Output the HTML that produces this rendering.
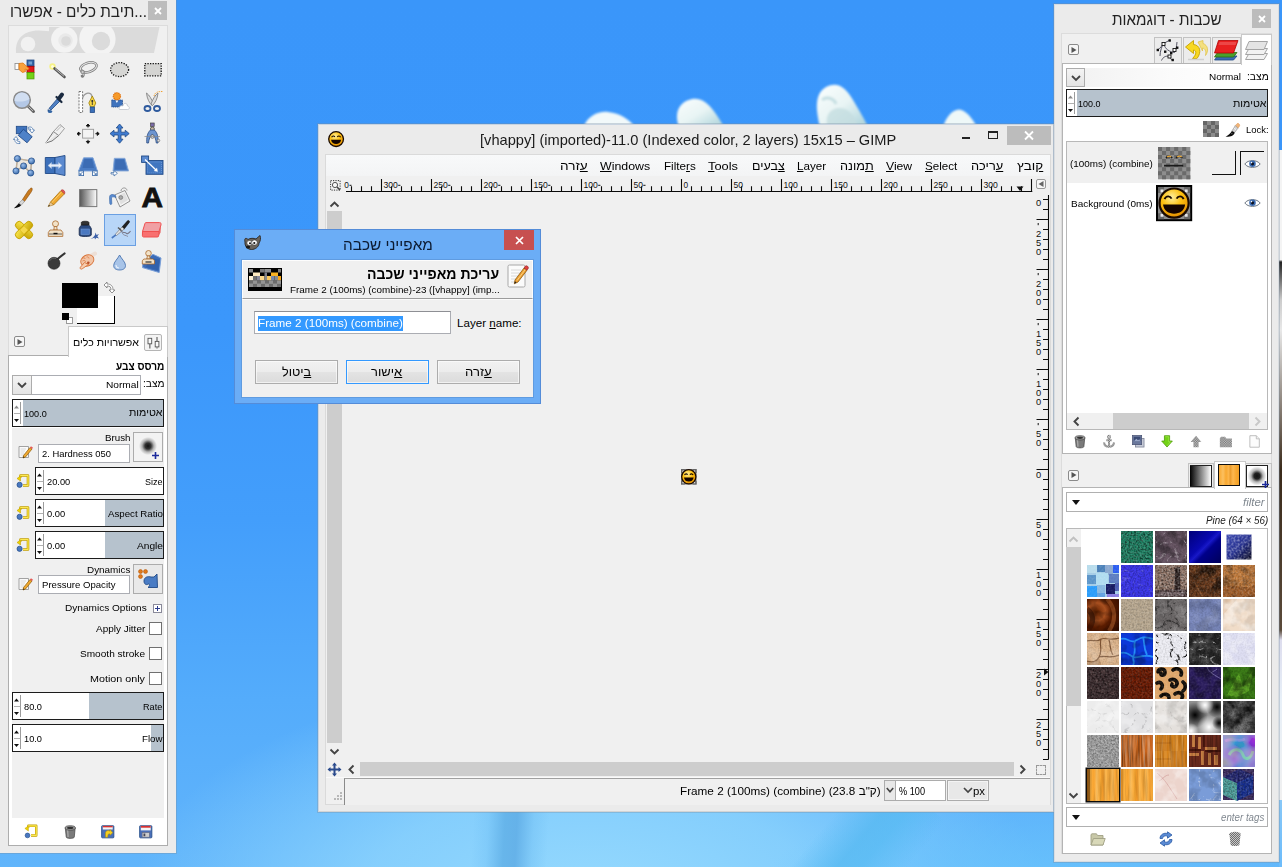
<!DOCTYPE html>
<html lang="he">
<head>
<meta charset="utf-8">
<title>GIMP</title>
<style>
*{box-sizing:border-box;margin:0;padding:0}
html,body{width:1282px;height:867px;overflow:hidden}
body{position:relative;font-family:"Liberation Sans",sans-serif;font-size:11px;color:#000;background:#3d98fa}
.abs,.abs div{position:absolute}
.t{position:absolute;white-space:nowrap;line-height:1}
.r{text-align:right}
svg{position:absolute;overflow:visible}
/* desktop */
#desk{left:0;top:0;width:1282px;height:867px;overflow:hidden;
 background:linear-gradient(180deg,#3a96fa 0px,#3b97fb 330px,#439efb 520px,#54acfb 700px,#5cb1fb 800px,#61b5fb 867px)}
/* generic window frame */
.win{background:#ebebeb;box-shadow:0 0 0 1px rgba(120,140,160,.35)}
.panel{background:#fff;border:1px solid #b4b4b4}
.gray{background:#f0f0f0}
.slider{border:1px solid #1c1c1c;background:#fff;overflow:hidden}
.slider .fill{top:0;bottom:0;right:0;background:#b6c2cd}
.slider .spin{left:0;top:0;bottom:0;width:10px;background:#fff}
.entry{background:#fff;border:1px solid #abadb3}
.btn{background:linear-gradient(#f4f4f4,#e4e4e4);border:1px solid #acacac}
.chk{background:#fff;border:1px solid #707070;width:13px;height:13px}
</style>
</head>
<body>
<div id="desk" class="abs">
<div style="left:0;top:0;width:1282px;height:867px;background:radial-gradient(ellipse 460px 230px at 590px 905px,rgba(150,218,254,1),rgba(142,213,253,.8) 50%,rgba(120,200,252,0) 100%)"></div>
<div style="left:760px;top:780px;width:520px;height:120px;background:radial-gradient(ellipse 300px 100px at 300px 110px,rgba(104,196,252,.9),rgba(104,196,252,0))"></div>
<div style="left:472px;top:800px;width:76px;height:80px;transform:skewX(-3deg);background:linear-gradient(90deg,rgba(96,176,230,0),rgba(110,190,244,.35) 20%,rgba(94,174,230,.8) 42%,rgba(92,170,228,.8) 58%,rgba(112,190,242,.4) 80%,rgba(96,176,230,0))"></div>
<div style="left:818px;top:775px;width:90px;height:150px;transform:rotate(40deg);transform-origin:50% 50%;background:linear-gradient(90deg,rgba(84,184,240,0),rgba(84,184,240,.7) 40%,rgba(86,186,242,.7) 60%,rgba(84,184,240,0))"></div>
<svg style="left:560px;top:70px" width="440" height="60" viewBox="560 70 440 60">
<defs><filter id="pb" x="-10%" y="-20%" width="120%" height="140%"><feGaussianBlur stdDeviation="1.300"/></filter>
<linearGradient id="pg2" x1="0" y1="0" x2="1" y2="1"><stop offset="0" stop-color="#fbfefe"/><stop offset=".5" stop-color="#e8f4f4"/><stop offset="1" stop-color="#a8d0d8"/></linearGradient></defs>
<g filter="url(#pb)">
<path d="M584 126C588 116 598 111 608 112C620 113 630 120 635 127Z" fill="#f2f9fa"/>
<path d="M679 127C674 114 678 102 692 99C704 97 712 106 724 127Z" fill="url(#pg2)"/>
<path d="M820 127C816 110 814 94 826 87C838 81 846 88 853 100C859 110 865 120 868 127Z" fill="url(#pg2)"/>
<path d="M828 127C824 116 830 108 840 108C850 108 856 118 858 127Z" fill="#c4dde0" opacity=".8"/>
<path d="M822 100C826 96 834 98 836 104" fill="none" stroke="#b4d4d8" stroke-width="3" opacity=".7"/>
<path d="M943 127C946 117 952 110 959 109.500C966 110 972 118 977 127Z" fill="#eef8f8"/>
</g>
</svg>
<!-- right sliver beyond the dock -->
<div style="left:1279px;top:0;width:3px;height:867px;background:linear-gradient(180deg,#3a96fa 0,#3a96fa 150px,#f4f4f4 150px,#f4f4f4 260px,#ddd 260px,#222 262px,#ccc 300px,#e8e8e8 330px,#3a2a1a 470px,#5a4a3a 630px,#dde 640px,#e8f0f8 700px,#f0f0f0 800px,#88c8f8 800px,#6cbcfb 867px)"></div>

</div>

<!-- ================= TOOLBOX ================= -->
<div id="toolbox" class="abs win" style="left:0;top:0;width:176px;height:853px">
<div style="left:148px;top:1px;width:19px;height:19px;background:#bcbcbc"></div>
<svg style="left:154px;top:7px" width="8" height="8" viewBox="0 0 8 8"><path d="M1 1L7 7M7 1L1 7" stroke="#fff" stroke-width="1.8"/></svg>
<!-- inner tool area -->
<div style="left:8px;top:25px;width:160px;height:821px;background:#f0f0f0;border:1px solid #dcdcdc"></div>
<!-- wilber header -->
<svg style="left:15px;top:27px;overflow:hidden" width="146" height="26" viewBox="0 0 146 26">
 <g fill="#dbdbdb">
  <path d="M1 26 C0 14 6 6 18 4 C28 2.500 36 6 44 4 L44 26Z"/>
  <path d="M34 0 L144.500 0 L139 26 L34 26Z"/>
 </g>
 <circle cx="13" cy="17" r="7.300" fill="#f1f1f1"/>
 <circle cx="49.300" cy="12.600" r="13.200" fill="#f3f3f3"/>
 <circle cx="50.500" cy="13.500" r="7.200" fill="#e9e9e9"/>
 <circle cx="51" cy="14" r="4.800" fill="#dbdbdb"/>
 <circle cx="82.400" cy="12" r="18.200" fill="#f3f3f3"/>
 <circle cx="86" cy="14" r="9.200" fill="#dbdbdb"/>
</svg>
<!--TOOLS-->
<!-- selected tool -->
<div style="left:104px;top:214px;width:32px;height:32px;background:#b8d6f8;border:1px solid #6a9fe2"></div>
<svg style="left:0;top:0" width="176" height="330" viewBox="0 0 176 330">
<defs>
<linearGradient id="gbl" x1="0" y1="0" x2="0" y2="1"><stop offset="0" stop-color="#6d9ad6"/><stop offset="1" stop-color="#3465a4"/></linearGradient>
<linearGradient id="ggr" x1="0" y1="0" x2="1" y2="0"><stop offset="0" stop-color="#555"/><stop offset="1" stop-color="#fff"/></linearGradient>
<radialGradient id="gball" cx=".4" cy=".35" r=".7"><stop offset="0" stop-color="#9cc0ee"/><stop offset="1" stop-color="#3465a4"/></radialGradient>
<linearGradient id="gyel" x1="0" y1="0" x2="1" y2="1"><stop offset="0" stop-color="#fce94f"/><stop offset="1" stop-color="#c4a000"/></linearGradient>
</defs>
<!-- r0c0 select by colour -->
<g><rect x="27" y="60" width="7" height="6.3" fill="#3465a4" stroke="#204a87" stroke-width=".8"/><rect x="28.5" y="61.5" width="3.5" height="3" fill="#729fcf"/>
<rect x="27" y="66.3" width="7" height="6.3" fill="#e01818" stroke="#a40000" stroke-width=".8"/>
<rect x="27" y="72.6" width="7" height="6.3" fill="#73d216" stroke="#4e9a06" stroke-width=".8"/>
<rect x="15" y="63.5" width="4" height="6" fill="#fff" stroke="#888" stroke-width=".8"/>
<path d="M19 63.5 L23 63 L29 68.5 L27.5 70 L25 69 L25.5 71.5 L22.5 72.5 L19 69.5Z" fill="#f9a23c" stroke="#e07810" stroke-width=".8"/></g>
<!-- r0c1 fuzzy select -->
<g><circle cx="52.5" cy="66.5" r="3.2" fill="#f6f27a" opacity=".9"/><circle cx="52.5" cy="66.5" r="1.5" fill="#fffde0"/>
<path d="M54.5 68.5 L64.5 77" stroke="#555" stroke-width="2.6" stroke-linecap="round"/><path d="M55 68.6 L64 76.3" stroke="#bbb" stroke-width="1"/></g>
<!-- r0c2 lasso -->
<g fill="none"><ellipse cx="88.500" cy="67.300" rx="8.300" ry="4.600" transform="rotate(-17 88.500 67.300)" stroke="#7c7c7c" stroke-width="2.600"/><ellipse cx="88.500" cy="67.300" rx="8.300" ry="4.600" transform="rotate(-17 88.500 67.300)" stroke="#e4e4e4" stroke-width="1"/>
<path d="M81.500 70 C82.500 72.500 84.500 73 83.500 75.500 C83 77.300 81.300 77 82 75" stroke="#7c7c7c" stroke-width="2.200"/><path d="M81.500 70 C82.500 72.500 84.500 73 83.500 75.500" stroke="#e4e4e4" stroke-width=".8"/><circle cx="82.600" cy="72" r="1.700" fill="#ccc" stroke="#777" stroke-width=".8"/></g>
<!-- r0c3 ellipse select -->
<ellipse cx="119.6" cy="69.6" rx="9" ry="7" fill="#d6d6d4" stroke="#111" stroke-width="1.3" stroke-dasharray="1.3 1.3"/>
<!-- r0c4 rect select -->
<rect x="144.8" y="63.6" width="16.4" height="12.2" fill="#d4d4d2" stroke="#111" stroke-width="1.3" stroke-dasharray="1.3 1.3"/>
<!-- r1c0 zoom -->
<g><path d="M28 106 L33.5 111.5" stroke="#666" stroke-width="3" stroke-linecap="round"/><path d="M28.5 106.5 L33 111" stroke="#bbb" stroke-width="1"/>
<circle cx="22" cy="100" r="8.3" fill="#b4c8e6" stroke="#8a8a8a" stroke-width="1.5"/><path d="M14.5 101 A7.5 7.5 0 0 1 29.5 99 C25 102 19 102 14.5 101Z" fill="#d4e0f2" opacity=".9"/></g>
<!-- r1c1 colour picker -->
<g><path d="M49 108.5 L58 98 L60.5 100.5 L51 110Z" fill="#4f80c4" stroke="#204a87" stroke-width=".8"/><path d="M48 109 C47 111 48 112 50 111Z" fill="#204a87"/>
<path d="M56.5 97 L61.5 102" stroke="#1a2a40" stroke-width="2.2" stroke-linecap="round"/><path d="M59 98.5 L62 94.5" stroke="#1a2a40" stroke-width="4" stroke-linecap="round"/>
<ellipse cx="50" cy="111.5" rx="2.2" ry="1.5" fill="#3465a4"/></g>
<!-- r1c2 paths -->
<g><rect x="79" y="91.5" width="3.6" height="21" fill="#fff" stroke="#666" stroke-width=".9" stroke-dasharray="2 1.2"/>
<path d="M82.5 98 C85 92 91 91.5 92.3 97" fill="none" stroke="#999" stroke-width="1.3"/>
<path d="M92.3 96 L95.8 103 L94 107 L90.6 107 L88.8 103Z" fill="#f5d547" stroke="#a08000" stroke-width=".8"/><path d="M92.3 100 L92.3 105" stroke="#333" stroke-width=".9"/><circle cx="92.3" cy="101" r="1" fill="#333"/>
<rect x="90.2" y="107" width="4.2" height="5.5" fill="#3a6fb8" stroke="#204a87" stroke-width=".8"/></g>
<!-- r1c3 foreground select -->
<g><rect x="111.7" y="100" width="10.8" height="7" fill="#3f73bd" stroke="#204a87" stroke-width=".9" stroke-dasharray="1.2 .8"/>
<circle cx="116.9" cy="96.3" r="3.6" fill="#f59a2a" stroke="#e06a00" stroke-width="1.2" stroke-dasharray="1.2 .8"/><path d="M115.5 100.5 L116.9 103 L118.3 100.5Z" fill="#fff"/>
<path d="M119.5 109.5 C118 107 121 105 123 106 C123 102.5 127.5 102.5 127.5 106 C130 106.5 130 109.5 127.5 109.5Z" fill="#fff" stroke="#c0c4cc" stroke-width=".8"/></g>
<!-- r1c4 scissors -->
<g><path d="M146.5 93 C147 99 149.5 103 152 105.5 L153.5 104 C152 100 149.5 95 146.5 93Z" fill="#ddd" stroke="#777" stroke-width=".8"/>
<path d="M158 93 C157.5 99 155 103 152.5 105.5 L151 104 C152.5 100 155 95 158 93Z" fill="#ddd" stroke="#777" stroke-width=".8"/>
<ellipse cx="147.5" cy="108.5" rx="3" ry="2.5" fill="none" stroke="#2e5a9e" stroke-width="1.8"/><ellipse cx="157" cy="108.5" rx="3" ry="2.5" fill="none" stroke="#2e5a9e" stroke-width="1.8"/>
<path d="M154 96 C155 92 158 91.5 163 91.5" fill="none" stroke="#f0a030" stroke-width="1" stroke-dasharray="1.3 1"/></g>
<!-- r2c0 rotate -->
<g><rect x="16.3" y="126.3" width="10.5" height="7.4" fill="#3f73bd" stroke="#204a87" stroke-width=".8"/>
<rect x="19.5" y="132" width="11.5" height="8" transform="rotate(40 25.2 136)" fill="#4f82c8" stroke="#204a87" stroke-width=".8"/>
<path d="M28 127.5 C31 126 33 128 33 130 L34.5 130 L32 133 L29.5 130 L31 130 C31 129 30 128.5 28.5 129.3Z" fill="#fff" stroke="#3465a4" stroke-width=".7"/>
<path d="M20 143.5 C16.5 144 14.5 142 15 139.5 L13.3 139.3 L16.2 136.5 L18.3 140 L16.8 139.8 C16.7 141 17.8 141.8 19.8 141.6Z" fill="#fff" stroke="#3465a4" stroke-width=".7"/></g>
<!-- r2c1 crop knife -->
<g><path d="M45.800 143 L53.500 131.500 L58.800 135.500 L52 141Z" fill="#e6e6e6" stroke="#6a6a6a" stroke-width=".9"/><path d="M45.800 143 L56 133.500" stroke="#fff" stroke-width=".8"/>
<path d="M53.500 131.500 L60 124.500 L64.500 128.500 L58.800 135.500Z" fill="#f0f0f0" stroke="#8a8a8a" stroke-width=".8"/><path d="M56.500 131 L61.500 126" stroke="#aaa" stroke-width=".8"/></g>
<!-- r2c2 align -->
<g><rect x="82.6" y="129.3" width="11" height="8.8" fill="#f4f4f4" stroke="#999" stroke-width=".9"/>
<g fill="#111" stroke="#111" stroke-width="1"><path d="M80.8 133.7 H78"/><path d="M79 132 L77 133.7 L79 135.4Z"/><path d="M95.4 133.7 H98"/><path d="M97.2 132 L99.2 133.7 L97.2 135.4Z"/>
<path d="M88 127.5 V125"/><path d="M86.3 126 L88 124 L89.7 126Z"/><path d="M88 139.8 V142.4"/><path d="M86.3 141.4 L88 143.4 L89.7 141.4Z"/></g></g>
<!-- r2c3 move -->
<path d="M119.6 124 L123 128 L121 128 L121 132.2 L125.2 132.2 L125.2 130.2 L129.2 133.6 L125.2 137 L125.2 135 L121 135 L121 139.2 L123 139.2 L119.6 143.2 L116.2 139.2 L118.2 139.2 L118.2 135 L114 135 L114 137 L110 133.6 L114 130.2 L114 132.2 L118.2 132.2 L118.2 128 L116.2 128Z" fill="#3f7bd0" stroke="#204a87" stroke-width=".8"/>
<!-- r2c4 measure compass -->
<g><rect x="150.6" y="123" width="3.6" height="3.4" fill="#7a6aa8" stroke="#444" stroke-width=".7"/><circle cx="152.4" cy="129" r="2" fill="#c8b8a0" stroke="#444" stroke-width=".8"/>
<path d="M150.5 130 C147 133 146.5 138 146.8 143 L148.5 143 C149 139 150 136 152.4 134.5 C154.8 136 155.8 139 156.3 143 L158 143 C158.3 138 157.8 133 154.3 130Z" fill="#6d95d0" stroke="#2a4a80" stroke-width=".8"/>
<circle cx="152.4" cy="136.5" r="1.8" fill="#ddd" stroke="#555" stroke-width=".7"/><path d="M144.5 136.5 H160" stroke="#888" stroke-width=".7"/><circle cx="158.5" cy="140.5" r="1.3" fill="#ddd" stroke="#666" stroke-width=".6"/></g>
<!-- r3c0 cage -->
<g><path d="M17.4 158.6 L31.5 161 L30.7 173 L23.6 166 L16 171Z" fill="#e8e0d0" fill-opacity=".5" stroke="#a0a0a0" stroke-width="1.4"/><path d="M17.4 158.6 L31.5 161 L30.7 173 L23.6 166 L16 171Z" fill="none" stroke="#e0c090" stroke-width=".6"/>
<g fill="url(#gball)" stroke="#204a87" stroke-width=".7"><circle cx="17.4" cy="158.6" r="3.1"/><circle cx="31.5" cy="161" r="3.1"/><circle cx="23.6" cy="166" r="3.1"/><circle cx="16" cy="171" r="3.1"/><circle cx="30.7" cy="173" r="3.1"/></g></g>
<!-- r3c1 flip -->
<g><path d="M45.3 157.5 L55 157.5 L55 173.5 L45.3 173.5Z" fill="#3c70ba" stroke="#204a87" stroke-width=".9"/><path d="M55 157.5 L65 155.5 L65 175.5 L55 173.5Z" fill="#5b8ad0" stroke="#204a87" stroke-width=".9"/>
<path d="M48 165.5 L51.5 162.5 L51.5 164.3 L58.5 164.3 L58.5 162.5 L62 165.5 L58.5 168.5 L58.5 166.7 L51.5 166.7 L51.5 168.5Z" fill="#e8eef8" stroke="#a8c0e0" stroke-width=".5"/></g>
<!-- r3c2 perspective -->
<g><path d="M83.6 157.8 L93 157.8 L97.4 171 L78.6 171Z" fill="#4a7cc4" stroke="#7ba0d8" stroke-width=".9"/><path d="M84.5 159 L92 159 L94 168 L82.5 168Z" fill="#3c6cb4"/>
<rect x="79" y="171" width="4.6" height="4.6" fill="#fff" stroke="#3465a4" stroke-width=".8"/><rect x="92.6" y="171" width="4.6" height="4.6" fill="#fff" stroke="#3465a4" stroke-width=".8"/>
<path d="M80 174.6 L82.6 172 M80 174.6 L80 173 M80 174.6 L81.6 174.6" stroke="#3465a4" stroke-width=".8"/><path d="M96.2 174.6 L93.6 172 M96.2 174.6 L96.2 173 M96.2 174.6 L94.6 174.6" stroke="#3465a4" stroke-width=".8"/></g>
<!-- r3c3 shear -->
<g><path d="M114.3 158.3 L124.9 158.3 L128.6 171 L113 171Z" fill="#4a7cc4" stroke="#8aaad8" stroke-width=".9"/><path d="M115.5 159.5 L124 159.5 L126.5 169.5 L115 169.5Z" fill="#3c6cb4"/>
<path d="M111 172.6 L114 172.6 L114 170.6 L117.4 173.3 L114 176 L114 174 L111 174Z" fill="#fff" stroke="#3465a4" stroke-width=".7"/></g>
<!-- r3c4 scale -->
<g><rect x="146" y="160.5" width="17" height="13.8" fill="#4076c0" stroke="#204a87" stroke-width=".9"/><rect x="147.5" y="162" width="14" height="10.8" fill="none" stroke="#7ba0d8" stroke-width=".7" stroke-dasharray="1 1"/>
<rect x="141.6" y="156" width="7" height="6.4" fill="#5a8ad0" stroke="#204a87" stroke-width=".9"/>
<path d="M145 159.5 L156.5 170.5" stroke="#fff" stroke-width="1.3"/><path d="M157.8 171.8 L153.8 171 L157 167.8Z" fill="#fff"/></g>
<!-- r4c0 paintbrush -->
<g><path d="M31.8 188 C32.8 189 32 191 30.5 193 L24.5 201.5 L22.3 199.8 L28 191 C29.5 189 31 187.5 31.8 188Z" fill="#c87a20" stroke="#8a4a00" stroke-width=".6"/>
<path d="M22.3 199.8 L24.5 201.5 L21.2 205.2 L18.8 203.3Z" fill="#d8d8d8" stroke="#888" stroke-width=".6"/>
<path d="M18.8 203.3 L21.2 205.2 C19 207.5 16 208 13.8 208.2 C15.5 207 17 205.5 18.8 203.3Z" fill="#111"/></g>
<!-- r4c1 pencil -->
<g><path d="M50.5 202 L61 190.5 L64.5 193.8 L53.5 205Z" fill="#f0a830" stroke="#a06800" stroke-width=".7"/><path d="M51.5 203 L62 191.5" stroke="#f8d070" stroke-width="1"/>
<path d="M61 190.500 C62.5 188.500 66 191.500 64.500 193.800Z" fill="#e85858" stroke="#a83030" stroke-width=".6"/>
<path d="M50.500 202 L53.500 205 L48 206.500Z" fill="#e8c898" stroke="#a06800" stroke-width=".5"/><path d="M48 206.500 L49.200 204.800 L49.900 205.900Z" fill="#222"/></g>
<!-- r4c2 blend -->
<rect x="79.600" y="189.600" width="17.200" height="17" fill="url(#ggr)" stroke="#777" stroke-width="1"/>
<!-- r4c3 bucket -->
<g><path d="M114.500 195 L125 190.500 L130 201 L120 207Z" fill="#f4f4f4" stroke="#888" stroke-width=".9"/><path d="M117.500 196 L124.500 192.500 L128 200 L120.800 204.500Z" fill="#e0e0e0"/>
<path d="M121 191 C121 187.500 126.500 186.500 127 190.500" fill="none" stroke="#999" stroke-width="1"/><circle cx="120.800" cy="197.500" r="1.900" fill="#aaa" stroke="#666" stroke-width=".6"/>
<path d="M115.500 195.500 C112 193.500 109.500 194.500 109.500 197.500 L109.800 203.500 C109.800 204.800 111.800 204.800 111.800 203.500 L111.500 198 C111.500 196.500 113.500 196.500 116 197.500Z" fill="#5a8ad0" stroke="#3465a4" stroke-width=".6"/></g>
<!-- r4c4 text tool: drawn with real text -->
<text x="152.300" y="207" text-anchor="middle" font-family="Liberation Sans, sans-serif" font-weight="bold" font-size="27.500" fill="#111" stroke="#111" stroke-width=".8" textLength="21.500" lengthAdjust="spacingAndGlyphs">A</text>
<!-- r5c0 heal -->
<g stroke="#c4a000" stroke-width=".9" fill="url(#gyel)"><rect x="13.500" y="226.300" width="21" height="7.400" rx="3.600" transform="rotate(45 24 230)"/><rect x="13.500" y="226.300" width="21" height="7.400" rx="3.600" transform="rotate(-45 24 230)"/></g>
<rect x="21" y="227" width="6" height="6" transform="rotate(45 24 230)" fill="#f4d84a" stroke="#d4b010" stroke-width=".5"/>
<!-- r5c1 clone stamp -->
<g fill="#f2e2c8" stroke="#a8682c" stroke-width=".8"><circle cx="55.500" cy="223.800" r="3"/><path d="M54.300 226.500 L56.700 226.500 L57.200 230 L53.800 230Z"/><path d="M50 230 L61 230 L62.800 232.500 L62.800 236.400 L48.300 236.400 L48.300 232.500Z"/></g><path d="M49 234 H62" stroke="#555" stroke-width=".9"/><path d="M53.500 233.500 H57.500" stroke="#111" stroke-width="1.400"/>
<!-- r5c2 ink -->
<g><path d="M80.500 226 C80.500 224.500 89.800 224.500 89.800 226 L91.300 228.500 L91.300 235 C91.300 237 79.200 237 79.200 235 L79.200 228.500Z" fill="#2a4a80" stroke="#1a2a4a" stroke-width=".8"/><rect x="81" y="229" width="8.500" height="5.500" fill="#4a78c0" stroke="#7ba0d8" stroke-width=".5"/>
<path d="M81.300 225 L81.300 222.500 C81.300 220.800 89 220.800 89 222.500 L89 225Z" fill="#333" stroke="#111" stroke-width=".6"/>
<path d="M93 237.500 L95 235 L95.500 232.500 L96.500 235 L99 234 L97.300 236.300 L99 238.500 L96.300 237.800 L95 239.500 L94.600 237.800 L90.500 239Z" fill="#3a5fa8"/></g>
<!-- r5c3 airbrush -->
<g><path d="M122 227 L127.500 220.800 C128.500 219.800 130.200 221.300 129.300 222.400 L124.200 229Z" fill="#222" stroke="#000" stroke-width=".5"/>
<path d="M122 227 L124.200 229 L116.500 235.500 L115.300 234.300Z" fill="#e4e4e4" stroke="#777" stroke-width=".7"/><path d="M115.900 234.900 L111.800 238" stroke="#4a78c0" stroke-width="1.600"/>
<path d="M118 227.500 L121.500 230.800" stroke="#555" stroke-width="1.400"/><path d="M121 230.500 C122 234 125 231.500 126 233 C127 235 129.500 232.500 130.500 231" fill="none" stroke="#778" stroke-width="1.100"/><path d="M122.300 233 C123.500 236 126 235 128 236.500" fill="none" stroke="#889" stroke-width=".9"/></g>
<!-- r5c4 eraser -->
<g><path d="M146 222.600 L159.500 222.600 C161 222.600 161.300 223.600 161 224.800 L159 231.500 L142.500 231.500 L144.800 224 C145 223 145.400 222.600 146 222.600Z" fill="#f0a0a4" stroke="#f05050" stroke-width="1"/><path d="M142.500 231.500 L159 231.500 L158.600 236 C158.500 236.800 158 237 157.300 237 L143.800 237 C142.800 237 142.400 236.500 142.400 235.800Z" fill="#f87070" stroke="#f05050" stroke-width="1"/><path d="M159 231.500 L161 224.800 L160.500 232.500 L158.600 236Z" fill="#e86060"/></g>
<!-- r6c1 dodge/burn -->
<g><path d="M57.500 259 L64.500 253.500" stroke="#333" stroke-width="2.200" stroke-linecap="round"/><circle cx="54" cy="263.300" r="6" fill="#3a3a3a" stroke="#222" stroke-width=".6"/><path d="M49.500 261 A5 5 0 0 1 56 258.500" stroke="#666" stroke-width="1" fill="none"/></g>
<!-- r6c2 smudge -->
<g><path d="M90 256.500 L95 253.500" stroke="#ecd8cc" stroke-width="4" stroke-linecap="round" opacity=".7"/>
<ellipse cx="87.300" cy="260.500" rx="6.800" ry="5.400" transform="rotate(-28 87.300 260.500)" fill="#f2c4a6" stroke="#d8743a" stroke-width=".9"/>
<path d="M84.500 262.500 L80.300 267.300 C79.500 268.500 81 269.800 82.200 268.800 L88.500 264.500Z" fill="#f6cdb0" stroke="#d8743a" stroke-width=".9"/>
<path d="M82.300 258.500 C83.500 257.300 85 257.800 85.300 259 M82.500 261 C83.800 260 85.300 260.500 85.600 261.800 M86.500 257 C88 256.500 89 257.500 89 258.500" fill="none" stroke="#d8743a" stroke-width=".7"/>
<circle cx="88.300" cy="262.800" r="1.300" fill="#b8502a"/></g>
<!-- r6c3 blur drop -->
<path d="M119.600 255 C121.500 259 125.500 262 125.500 265.500 C125.500 269 122.500 270 119.600 270 C116.700 270 113.700 269 113.700 265.500 C113.700 262 117.700 259 119.600 255Z" fill="#a8c4e8" stroke="#4a74b0" stroke-width=".9"/><path d="M116 265 C116 267 117.500 268 119 268" fill="none" stroke="#e4eefa" stroke-width="1.100"/>
<!-- r6c4 perspective clone -->
<g><path d="M143 262 L153 254.300 L161 258 L159.200 272.500 L142.500 267.600Z" fill="#3c6cb8" stroke="#7ba0d8" stroke-width="1"/><path d="M150 258 L159.500 259.500 L158.300 270.500 L146 267Z" fill="#2c5aa4" opacity=".6"/>
<g fill="#f2e2c8" stroke="#a8682c" stroke-width=".8"><circle cx="148.500" cy="253.300" r="2.800"/><path d="M147.400 255.800 L149.600 255.800 L150.200 259 L146.800 259Z"/><path d="M143.800 259 L153.200 259 L154.500 260.800 L154.500 264 L142.300 264 L142.300 260.800Z"/></g><path d="M145.500 262 H151.500" stroke="#222" stroke-width="1.100"/></g>
</svg>

<!-- fg/bg colours -->
<div style="left:77px;top:296px;width:38px;height:28px;background:#fff;border-right:1px solid #000;border-bottom:1px solid #000"></div>
<div style="left:62px;top:282.500px;width:36px;height:25.500px;background:#000"></div>
<div style="left:65.500px;top:316.500px;width:7.500px;height:7.500px;background:#fff;border:1px solid #9a9a9a"></div>
<div style="left:61.500px;top:312.500px;width:7px;height:7px;background:#000"></div>
<svg style="left:103px;top:281px" width="13" height="13" viewBox="0 0 13 13"><path d="M1 4 L4 1 L4 3 C8 3 10 5 10 9 L12 9 L9 12 L6 9 L8 9 C8 6 7 5 4 5 L4 7Z" fill="#fff" stroke="#777" stroke-width=".8"/></svg>
<!-- tab row -->
<div style="left:8px;top:355px;width:160px;height:491px;background:#fff;border:1px solid #adadad"></div>
<div style="left:68px;top:326px;width:100px;height:31px;background:#fff;border:1px solid #c9c9c9;border-bottom:none"></div>
<div style="left:14px;top:336px;width:11px;height:11px;border:1px solid #8a8a8a;border-radius:2px;background:#f6f6f6"></div>
<svg style="left:17px;top:339px" width="6" height="6" viewBox="0 0 6 6"><path d="M.5 0 L5.5 3 L.5 6Z" fill="#555"/></svg>
<div style="left:144px;top:334px;width:18px;height:17px;border:1px solid #b5b5b5;border-radius:2px;background:#f4f4f4"></div>
<svg style="left:146px;top:336px" width="14" height="14" viewBox="0 0 14 14"><rect x="3" y="7.500" width="1.600" height="5" fill="#8a8a8a"/><rect x="2" y="2.300" width="3.700" height="5.500" fill="#fafafa" stroke="#555" stroke-width=".9"/><rect x="10.200" y="1" width="1.600" height="4.500" fill="#8a8a8a"/><rect x="9.200" y="5.400" width="3.700" height="5.500" fill="#fafafa" stroke="#555" stroke-width=".9"/><rect x="10.200" y="11" width="1.600" height="1.500" fill="#8a8a8a"/></svg>
<!-- tool options -->
<div class="entry" style="left:12px;top:375px;width:129px;height:20px"></div>
<div class="btn" style="left:12px;top:375px;width:20px;height:20px"></div>
<svg style="left:17px;top:382px" width="10" height="7" viewBox="0 0 10 7"><path d="M1 1L5 5L9 1" fill="none" stroke="#444" stroke-width="1.8"/></svg>
<!-- opacity slider -->
<div class="slider" style="left:12px;top:399px;width:152px;height:28px"><div class="fill" style="left:10px"></div><div class="spin"></div></div>
<!-- grey scrolled area -->
<div style="left:12px;top:428px;width:151.500px;height:390px;background:#f0f0f0"></div>
<div class="btn" style="left:133px;top:432px;width:30px;height:30px;background:#f3f3f3"></div>
<div style="left:137px;top:436px;width:22px;height:22px;background:radial-gradient(circle at 11px 10px,#111 0,#333 3px,rgba(120,120,120,.5) 6px,rgba(240,240,240,0) 9px)"></div>
<svg style="left:152px;top:452px" width="7" height="7" viewBox="0 0 7 7"><path d="M3.5 0V7M0 3.5H7" stroke="#1c2a9c" stroke-width="1.6"/></svg>
<div class="entry" style="left:38px;top:444px;width:92px;height:19px"></div>
<!-- size / aspect / angle -->
<div class="slider" style="left:35px;top:467px;width:129px;height:28px"><div class="fill" style="left:128px"></div><div class="spin"></div></div>
<div class="slider" style="left:35px;top:499px;width:129px;height:28px"><div class="fill" style="left:69px"></div><div class="spin"></div></div>
<div class="slider" style="left:35px;top:531px;width:129px;height:28px"><div class="fill" style="left:69px"></div><div class="spin"></div></div>
<!-- dynamics -->
<div class="btn" style="left:133px;top:564px;width:30px;height:30px;background:#e9e9e9"></div>
<div class="entry" style="left:38px;top:575px;width:92px;height:19px"></div>
<div style="left:153px;top:604px;width:9px;height:9px;border:1px solid #8a8a9a;background:#fff"></div>
<svg style="left:155px;top:606px" width="5" height="5" viewBox="0 0 5 5"><path d="M2.5 0V5M0 2.5H5" stroke="#2a3a8c" stroke-width="1"/></svg>
<div class="chk" style="left:149px;top:622px"></div>
<div class="chk" style="left:149px;top:647px"></div>
<div class="chk" style="left:149px;top:672px"></div>
<div class="slider" style="left:12px;top:692px;width:152px;height:28px"><div class="fill" style="left:76px"></div><div class="spin"></div></div>
<div class="slider" style="left:12px;top:724px;width:152px;height:28px"><div class="fill" style="left:138px"></div><div class="spin"></div></div>

<div class="t" style="left:9.7px;top:3.3px;font-size:16.4px;transform-origin:0 50%;transform:scaleX(0.936);color:#222;direction:ltr">תיבת כלים - אפשרו...</div>
<div class="t" style="left:73.2px;top:337.2px;font-size:10.6px;transform-origin:0 50%;transform:scaleX(1.005);">אפשרויות כלים</div>
<div class="t" style="left:116.0px;top:361.0px;font-size:11px;transform-origin:0 50%;transform:scaleX(0.918);font-weight:bold">מרסס צבע</div>
<div class="t" style="left:142.7px;top:379.3px;font-size:10.4px;transform-origin:0 50%;transform:scaleX(0.983);direction:rtl">מצב:</div>
<div class="t" style="left:106.0px;top:379.6px;font-size:9.8px;transform-origin:0 50%;transform:scaleX(1.036);">Normal</div>
<div class="t" style="left:129.0px;top:408.3px;font-size:10.4px;transform-origin:0 50%;transform:scaleX(1.022);">אטימות</div>
<div class="t" style="left:24.0px;top:408.6px;font-size:9.8px;transform-origin:0 50%;transform:scaleX(0.927);">100.0</div>
<div class="t" style="left:105.0px;top:432.9px;font-size:9.8px;transform-origin:0 50%;transform:scaleX(0.996);">Brush</div>
<div class="t" style="left:41.5px;top:448.9px;font-size:9.8px;transform-origin:0 50%;transform:scaleX(0.960);">2. Hardness 050</div>
<div class="t" style="left:46.5px;top:476.9px;font-size:9.8px;transform-origin:0 50%;transform:scaleX(0.947);">20.00</div>
<div class="t" style="left:145.0px;top:476.9px;font-size:9.8px;transform-origin:0 50%;transform:scaleX(0.917);">Size</div>
<div class="t" style="left:46.5px;top:508.9px;font-size:9.8px;transform-origin:0 50%;transform:scaleX(0.956);">0.00</div>
<div class="t" style="left:107.5px;top:508.9px;font-size:9.8px;transform-origin:0 50%;transform:scaleX(0.990);">Aspect Ratio</div>
<div class="t" style="left:46.5px;top:540.9px;font-size:9.8px;transform-origin:0 50%;transform:scaleX(0.956);">0.00</div>
<div class="t" style="left:136.5px;top:540.9px;font-size:9.8px;transform-origin:0 50%;transform:scaleX(1.037);">Angle</div>
<div class="t" style="left:87.0px;top:565.1px;font-size:9.8px;transform-origin:0 50%;transform:scaleX(1.011);">Dynamics</div>
<div class="t" style="left:42.0px;top:580.1px;font-size:9.8px;transform-origin:0 50%;transform:scaleX(0.978);">Pressure Opacity</div>
<div class="t" style="left:65.0px;top:602.6px;font-size:9.8px;transform-origin:0 50%;transform:scaleX(1.028);">Dynamics Options</div>
<div class="t" style="left:95.8px;top:623.9px;font-size:9.8px;transform-origin:0 50%;transform:scaleX(1.016);">Apply Jitter</div>
<div class="t" style="left:80.0px;top:648.9px;font-size:9.8px;transform-origin:0 50%;transform:scaleX(1.029);">Smooth stroke</div>
<div class="t" style="left:90.0px;top:673.9px;font-size:9.8px;transform-origin:0 50%;transform:scaleX(1.097);">Motion only</div>
<div class="t" style="left:23.8px;top:701.9px;font-size:9.8px;transform-origin:0 50%;transform:scaleX(0.942);">80.0</div>
<div class="t" style="left:143.3px;top:701.9px;font-size:9.8px;transform-origin:0 50%;transform:scaleX(0.929);">Rate</div>
<div class="t" style="left:23.8px;top:733.9px;font-size:9.8px;transform-origin:0 50%;transform:scaleX(0.942);">10.0</div>
<div class="t" style="left:142.0px;top:733.9px;font-size:9.8px;transform-origin:0 50%;transform:scaleX(0.990);">Flow</div>
<svg style="left:13px;top:400px" width="10" height="26" viewBox="0 0 10 26"><path d="M1 8.500L3.500 5.500L6 8.500Z" fill="#8c8c8c"/><path d="M1 19L3.500 22L6 19Z" fill="#111"/><path d="M7.500 2V24" stroke="#9c9c9c" stroke-width="1"/><path d="M1 13.500H7.500" stroke="#a8a8a8" stroke-width=".9"/></svg>
<svg style="left:36px;top:468px" width="10" height="26" viewBox="0 0 10 26"><path d="M1 8.500L3.500 5.500L6 8.500Z" fill="#111"/><path d="M1 19L3.500 22L6 19Z" fill="#111"/><path d="M7.500 2V24" stroke="#9c9c9c" stroke-width="1"/><path d="M1 13.500H7.500" stroke="#a8a8a8" stroke-width=".9"/></svg>
<svg style="left:36px;top:500px" width="10" height="26" viewBox="0 0 10 26"><path d="M1 8.500L3.500 5.500L6 8.500Z" fill="#111"/><path d="M1 19L3.500 22L6 19Z" fill="#111"/><path d="M7.500 2V24" stroke="#9c9c9c" stroke-width="1"/><path d="M1 13.500H7.500" stroke="#a8a8a8" stroke-width=".9"/></svg>
<svg style="left:36px;top:532px" width="10" height="26" viewBox="0 0 10 26"><path d="M1 8.500L3.500 5.500L6 8.500Z" fill="#111"/><path d="M1 19L3.500 22L6 19Z" fill="#111"/><path d="M7.500 2V24" stroke="#9c9c9c" stroke-width="1"/><path d="M1 13.500H7.500" stroke="#a8a8a8" stroke-width=".9"/></svg>
<svg style="left:13px;top:693px" width="10" height="26" viewBox="0 0 10 26"><path d="M1 8.500L3.500 5.500L6 8.500Z" fill="#111"/><path d="M1 19L3.500 22L6 19Z" fill="#111"/><path d="M7.500 2V24" stroke="#9c9c9c" stroke-width="1"/><path d="M1 13.500H7.500" stroke="#a8a8a8" stroke-width=".9"/></svg>
<svg style="left:13px;top:725px" width="10" height="26" viewBox="0 0 10 26"><path d="M1 8.500L3.500 5.500L6 8.500Z" fill="#111"/><path d="M1 19L3.500 22L6 19Z" fill="#111"/><path d="M7.500 2V24" stroke="#9c9c9c" stroke-width="1"/><path d="M1 13.500H7.500" stroke="#a8a8a8" stroke-width=".9"/></svg>
<svg style="left:16px;top:474px" width="14" height="14" viewBox="0 0 14 14"><path d="M4.500 3.500 L4.500 1.500 L12 1.500 L12 11.500 L7 11.500" fill="none" stroke="#c4a000" stroke-width="2.600" stroke-linejoin="round"/><path d="M4.500 3.500 L4.500 1.500 L12 1.500 L12 11.500 L7 11.500" fill="none" stroke="#fce94f" stroke-width="1.200" stroke-linejoin="round"/><path d="M1 4.500 L4.500 2 L4.500 7Z" fill="#edd400" stroke="#c4a000" stroke-width=".6"/><circle cx="3.600" cy="10.800" r="2.600" fill="#4a78c0" stroke="#204a87" stroke-width=".7"/></svg>
<svg style="left:16px;top:506px" width="14" height="14" viewBox="0 0 14 14"><path d="M4.500 3.500 L4.500 1.500 L12 1.500 L12 11.500 L7 11.500" fill="none" stroke="#c4a000" stroke-width="2.600" stroke-linejoin="round"/><path d="M4.500 3.500 L4.500 1.500 L12 1.500 L12 11.500 L7 11.500" fill="none" stroke="#fce94f" stroke-width="1.200" stroke-linejoin="round"/><path d="M1 4.500 L4.500 2 L4.500 7Z" fill="#edd400" stroke="#c4a000" stroke-width=".6"/><circle cx="3.600" cy="10.800" r="2.600" fill="#4a78c0" stroke="#204a87" stroke-width=".7"/></svg>
<svg style="left:16px;top:538px" width="14" height="14" viewBox="0 0 14 14"><path d="M4.500 3.500 L4.500 1.500 L12 1.500 L12 11.500 L7 11.500" fill="none" stroke="#c4a000" stroke-width="2.600" stroke-linejoin="round"/><path d="M4.500 3.500 L4.500 1.500 L12 1.500 L12 11.500 L7 11.500" fill="none" stroke="#fce94f" stroke-width="1.200" stroke-linejoin="round"/><path d="M1 4.500 L4.500 2 L4.500 7Z" fill="#edd400" stroke="#c4a000" stroke-width=".6"/><circle cx="3.600" cy="10.800" r="2.600" fill="#4a78c0" stroke="#204a87" stroke-width=".7"/></svg>
<svg style="left:18px;top:445px" width="15" height="14" viewBox="0 0 15 14"><path d="M1 1.500 H10.500 V12.500 H1Z" fill="#fafafa" stroke="#999" stroke-width=".9"/><path d="M2.500 4H8M2.500 6H7M2.500 8H6M2.500 10H6" stroke="#ccc" stroke-width=".7"/><path d="M5.500 10.500 L12 2.500 L14 4 L7.500 12 L5 13Z" fill="#f0a830" stroke="#8a5a00" stroke-width=".7"/><path d="M12 2.500 L13 1.300 L15 2.800 L14 4Z" fill="#e85858"/><path d="M5 13 L5.500 11.300 L6.500 12.200Z" fill="#222"/></svg>
<svg style="left:18px;top:577px" width="15" height="14" viewBox="0 0 15 14"><path d="M1 1.500 H10.500 V12.500 H1Z" fill="#fafafa" stroke="#999" stroke-width=".9"/><path d="M2.500 4H8M2.500 6H7M2.500 8H6M2.500 10H6" stroke="#ccc" stroke-width=".7"/><path d="M5.500 10.500 L12 2.500 L14 4 L7.500 12 L5 13Z" fill="#f0a830" stroke="#8a5a00" stroke-width=".7"/><path d="M12 2.500 L13 1.300 L15 2.800 L14 4Z" fill="#e85858"/><path d="M5 13 L5.500 11.300 L6.500 12.200Z" fill="#222"/></svg>
<svg style="left:136px;top:567px" width="24" height="24" viewBox="0 0 24 24"><g fill="#e07a1c" stroke="#b05000" stroke-width=".5"><circle cx="4.500" cy="4.500" r="2"/><circle cx="9.500" cy="4.500" r="2"/><circle cx="4.500" cy="9.500" r="2"/></g><path d="M8 14 C8 10 12 9 15 10 L18 10 L21 7 L21.500 20.500 L12 20.500 C14 19 14 17 12.500 17 C10 18.500 8 17 8 14Z" fill="#4a7cc4" stroke="#204a87" stroke-width=".9"/></svg>
<svg style="left:24px;top:824px" width="14" height="15" viewBox="0 0 16 17"><path d="M5 4 L5 2 L14 2 L14 13 L8 13" fill="none" stroke="#c4a000" stroke-width="2.800" stroke-linejoin="round"/><path d="M5 4 L5 2 L14 2 L14 13 L8 13" fill="none" stroke="#fce94f" stroke-width="1.300" stroke-linejoin="round"/><path d="M1 5 L5 2.300 L5 8Z" fill="#edd400" stroke="#c4a000" stroke-width=".6"/><circle cx="4" cy="13" r="2.700" fill="#4a78c0" stroke="#204a87" stroke-width=".7"/></svg>
<svg style="left:63.500px;top:824.500px" width="12.500" height="14.300" viewBox="0 0 14 16"><path d="M1.500 3.500 L2.500 13.500 C2.500 15.500 11.500 15.500 11.500 13.500 L12.500 3.500Z" fill="#7a7a7a" stroke="#444" stroke-width=".8"/><path d="M4 5 L4.600 13.500" stroke="#aaa" stroke-width="1.500"/><ellipse cx="7" cy="3.300" rx="5.800" ry="2.500" fill="#999" stroke="#444" stroke-width=".8"/><ellipse cx="7" cy="3.300" rx="3.600" ry="1.300" fill="#333"/></svg>
<svg style="left:100.800px;top:824.800px" width="13.500" height="13.500" viewBox="0 0 15 15"><rect x=".700" y=".700" width="13.600" height="13.600" rx="1" fill="#4a6fb8" stroke="#204a87" stroke-width=".9"/><rect x="2" y="1" width="11" height="4" fill="#f4f4f4"/><rect x="2" y="1" width="11" height="1.600" fill="#d83030"/><path d="M5 13.500 L5 9 C5 6 9 5.500 10 7 L10 5 L13 8.500 L10 11.500 L10 10 C8.500 9.500 7.500 10 7.500 13.500Z" fill="#f5d020" stroke="#b89000" stroke-width=".6"/></svg>
<svg style="left:138.800px;top:824.800px" width="13.500" height="13.500" viewBox="0 0 15 15"><rect x=".700" y=".700" width="13.600" height="13.600" rx="1" fill="#4a6fb8" stroke="#204a87" stroke-width=".9"/><rect x="2" y="1" width="11" height="5" fill="#f4f4f4"/><rect x="2" y="1" width="11" height="2" fill="#d83030"/><rect x="3.500" y="8.500" width="8" height="5" fill="#ccc" stroke="#667" stroke-width=".6"/><rect x="5" y="9.500" width="2" height="3" fill="#445"/></svg>


</div>

<!-- ================= MAIN IMAGE WINDOW ================= -->
<div id="main" class="abs win" style="left:318px;top:124px;width:736px;height:688px">
<div style="left:-318px;top:-124px;width:0;height:0">
<div style="left:318px;top:124px;width:736px;height:688px;border:1px solid #c9d4e0;border-bottom-color:#d4d4d4"></div>
<svg style="left:328px;top:131px" width="16.2" height="16.2" viewBox="0 0 16 16"><defs><radialGradient id="sma" cx=".42" cy=".3" r=".75"><stop offset="0" stop-color="#fff0a0"/><stop offset=".45" stop-color="#fdc010"/><stop offset="1" stop-color="#e08800"/></radialGradient></defs><circle cx="8" cy="8" r="7.300" fill="url(#sma)" stroke="#1a0a00" stroke-width="1.300"/><path d="M3.600 6.200 C4.300 4.600 6 4.600 6.800 6 M9.200 6 C10 4.600 11.700 4.600 12.400 6.200" fill="none" stroke="#1a0a00" stroke-width="1.100"/><path d="M3 8.600 L13 8.600 C12.500 11.600 10.500 12.800 8 12.800 C5.500 12.800 3.500 11.600 3 8.600Z" fill="#140400"/></svg>
<div class="t" style="left:479.8px;top:132.7px;font-size:14.6px;transform-origin:0 50%;transform:scaleX(1.003);color:#1a1a1a">[vhappy] (imported)-11.0 (Indexed color, 2 layers) 15x15 – GIMP</div>
<div style="left:1007px;top:126px;width:44px;height:19px;background:#bcbcbc"></div>
<svg style="left:1024px;top:131px" width="10" height="9" viewBox="0 0 10 9"><path d="M1 .5L9 8.500M9 .5L1 8.500" stroke="#fff" stroke-width="1.800"/></svg>
<div style="left:988px;top:131px;width:10px;height:8px;border:1px solid #222;border-top-width:2px"></div>
<div style="left:962px;top:137px;width:8px;height:2px;background:#222"></div>
<div style="left:325px;top:154px;width:726px;height:651px;background:#f0f0f0;border:1px solid #dadada"></div>
<div style="left:326px;top:155px;width:724px;height:21px;background:linear-gradient(#f8f9fa,#f3f4f5)"></div>
<div class="t" style="left:1016.9px;top:160.1px;font-size:12.4px;transform-origin:0 50%;transform:scaleX(1.085);text-underline-offset:1px"><u>ק</u>ובץ</div>
<div class="t" style="left:971.4px;top:160.1px;font-size:12.4px;transform-origin:0 50%;transform:scaleX(1.034);text-underline-offset:1px"><u>ע</u>ריכה</div>
<div class="t" style="left:925.4px;top:160.2px;font-size:11.6px;transform-origin:0 50%;transform:scaleX(0.998);text-underline-offset:1px"><u>S</u>elect</div>
<div class="t" style="left:886.4px;top:160.2px;font-size:11.6px;transform-origin:0 50%;transform:scaleX(1.049);text-underline-offset:1px"><u>V</u>iew</div>
<div class="t" style="left:839.9px;top:160.1px;font-size:12.4px;transform-origin:0 50%;transform:scaleX(1.023);text-underline-offset:1px"><u>ת</u>מונה</div>
<div class="t" style="left:797.4px;top:160.2px;font-size:11.6px;transform-origin:0 50%;transform:scaleX(1.005);text-underline-offset:1px"><u>L</u>ayer</div>
<div class="t" style="left:751.9px;top:160.1px;font-size:12.4px;transform-origin:0 50%;transform:scaleX(1.007);text-underline-offset:1px"><u>צ</u>בעים</div>
<div class="t" style="left:708.4px;top:160.2px;font-size:11.6px;transform-origin:0 50%;transform:scaleX(1.106);text-underline-offset:1px"><u>T</u>ools</div>
<div class="t" style="left:663.8px;top:160.2px;font-size:11.6px;transform-origin:0 50%;transform:scaleX(1.006);text-underline-offset:1px">Filte<u>r</u>s</div>
<div class="t" style="left:600.4px;top:160.2px;font-size:11.6px;transform-origin:0 50%;transform:scaleX(1.066);text-underline-offset:1px"><u>W</u>indows</div>
<div class="t" style="left:560.4px;top:160.1px;font-size:12.4px;transform-origin:0 50%;transform:scaleX(1.095);text-underline-offset:1px"><u>ע</u>זרה</div>
<svg style="left:0;top:0" width="1060" height="200" viewBox="0 0 1060 200"><g stroke="#0a0a0a" stroke-width="1.100" fill="none"><path d="M346 191.500H1032.300"/><path d="M351.50 186.2V191.5M361.50 186.2V191.5M371.50 186.2V191.5M381.50 179V191.5M391.50 186.2V191.5M401.50 186.2V191.5M411.50 186.2V191.5M421.50 186.2V191.5M431.50 179V191.5M441.50 186.2V191.5M451.50 186.2V191.5M461.50 186.2V191.5M471.50 186.2V191.5M481.50 179V191.5M491.50 186.2V191.5M501.50 186.2V191.5M511.50 186.2V191.5M521.50 186.2V191.5M531.50 179V191.5M541.50 186.2V191.5M551.50 186.2V191.5M561.50 186.2V191.5M571.50 186.2V191.5M581.50 179V191.5M591.50 186.2V191.5M601.50 186.2V191.5M611.50 186.2V191.5M621.50 186.2V191.5M631.50 179V191.5M641.50 186.2V191.5M651.50 186.2V191.5M661.50 186.2V191.5M671.50 186.2V191.5M681.50 179V191.5M691.50 186.2V191.5M701.50 186.2V191.5M711.50 186.2V191.5M721.50 186.2V191.5M731.50 179V191.5M741.50 186.2V191.5M751.50 186.2V191.5M761.50 186.2V191.5M771.50 186.2V191.5M781.50 179V191.5M791.50 186.2V191.5M801.50 186.2V191.5M811.50 186.2V191.5M821.50 186.2V191.5M831.50 179V191.5M841.50 186.2V191.5M851.50 186.2V191.5M861.50 186.2V191.5M871.50 186.2V191.5M881.50 179V191.5M891.50 186.2V191.5M901.50 186.2V191.5M911.50 186.2V191.5M921.50 186.2V191.5M931.50 179V191.5M941.50 186.2V191.5M951.50 186.2V191.5M961.50 186.2V191.5M971.50 186.2V191.5M981.50 179V191.5M991.50 186.2V191.5M1001.50 186.2V191.5M1011.50 186.2V191.5M1021.50 186.2V191.5M1031.50 179V191.5"/></g><g font-family="Liberation Sans, sans-serif" font-size="9.300" fill="#111"><text x="344.300" y="188" textLength="4.600" lengthAdjust="spacingAndGlyphs">0</text><path d="M349.500 185.300h2" stroke="#111" stroke-width="1"/><text x="383.40" y="188" textLength="14.4" lengthAdjust="spacingAndGlyphs">300</text><path d="M398.20 185.300h2.200" stroke="#111" stroke-width="1"/><text x="433.40" y="188" textLength="14.4" lengthAdjust="spacingAndGlyphs">250</text><path d="M448.20 185.300h2.200" stroke="#111" stroke-width="1"/><text x="483.40" y="188" textLength="14.4" lengthAdjust="spacingAndGlyphs">200</text><path d="M498.20 185.300h2.200" stroke="#111" stroke-width="1"/><text x="533.40" y="188" textLength="14.4" lengthAdjust="spacingAndGlyphs">150</text><path d="M548.20 185.300h2.200" stroke="#111" stroke-width="1"/><text x="583.40" y="188" textLength="14.4" lengthAdjust="spacingAndGlyphs">100</text><path d="M598.20 185.300h2.200" stroke="#111" stroke-width="1"/><text x="633.40" y="188" textLength="9.5" lengthAdjust="spacingAndGlyphs">50</text><path d="M643.30 185.300h2.200" stroke="#111" stroke-width="1"/><text x="683.40" y="188" textLength="4.6" lengthAdjust="spacingAndGlyphs">0</text><text x="733.40" y="188" textLength="9.5" lengthAdjust="spacingAndGlyphs">50</text><text x="783.40" y="188" textLength="14.4" lengthAdjust="spacingAndGlyphs">100</text><text x="833.40" y="188" textLength="14.4" lengthAdjust="spacingAndGlyphs">150</text><text x="883.40" y="188" textLength="14.4" lengthAdjust="spacingAndGlyphs">200</text><text x="933.40" y="188" textLength="14.4" lengthAdjust="spacingAndGlyphs">250</text><text x="983.40" y="188" textLength="14.4" lengthAdjust="spacingAndGlyphs">300</text></g><path d="M1016.500 186.500h7l-3.500 4.500z" fill="#111"/></svg>
<svg style="left:330px;top:180px" width="11" height="11" viewBox="0 0 11 11"><rect x=".6" y=".6" width="9.500" height="9.500" fill="none" stroke="#333" stroke-width="1" stroke-dasharray="1.200 1.200"/><circle cx="5" cy="5" r="2.600" fill="#f8f8f8" stroke="#555" stroke-width="1"/><path d="M7 7L10 10" stroke="#444" stroke-width="1.600"/></svg>
<div style="left:1036px;top:179px;width:10px;height:10px;border:1px solid #999;border-radius:2px;background:#f6f6f6"></div>
<svg style="left:1038px;top:181px" width="6" height="6" viewBox="0 0 6 6"><path d="M5.500 0L.5 3L5.500 6Z" fill="#666"/></svg>
<svg style="left:0;top:0" width="1060" height="800" viewBox="0 0 1060 800"><g stroke="#0a0a0a" stroke-width="1.100" fill="none"><path d="M1048.500 195V759.500"/><path d="M1043 199.50H1048.500M1043 209.50H1048.500M1036.500 219.50H1048.500M1043 229.50H1048.500M1043 239.50H1048.500M1043 249.50H1048.500M1043 259.50H1048.500M1036.500 269.50H1048.500M1043 279.50H1048.500M1043 289.50H1048.500M1043 299.50H1048.500M1043 309.50H1048.500M1036.500 319.50H1048.500M1043 329.50H1048.500M1043 339.50H1048.500M1043 349.50H1048.500M1043 359.50H1048.500M1036.500 369.50H1048.500M1043 379.50H1048.500M1043 389.50H1048.500M1043 399.50H1048.500M1043 409.50H1048.500M1036.500 419.50H1048.500M1043 429.50H1048.500M1043 439.50H1048.500M1043 449.50H1048.500M1043 459.50H1048.500M1036.500 469.50H1048.500M1043 479.50H1048.500M1043 489.50H1048.500M1043 499.50H1048.500M1043 509.50H1048.500M1036.500 519.50H1048.500M1043 529.50H1048.500M1043 539.50H1048.500M1043 549.50H1048.500M1043 559.50H1048.500M1036.500 569.50H1048.500M1043 579.50H1048.500M1043 589.50H1048.500M1043 599.50H1048.500M1043 609.50H1048.500M1036.500 619.50H1048.500M1043 629.50H1048.500M1043 639.50H1048.500M1043 649.50H1048.500M1043 659.50H1048.500M1036.500 669.50H1048.500M1043 679.50H1048.500M1043 689.50H1048.500M1043 699.50H1048.500M1043 709.50H1048.500M1036.500 719.50H1048.500M1043 729.50H1048.500M1043 739.50H1048.500M1043 749.50H1048.500M1043 759.50H1048.500"/></g><g font-family="Liberation Sans, sans-serif" font-size="9.300" fill="#111" text-anchor="middle"><text x="1038.700" y="205.800">0</text><path d="M1038.200 223.00v2.200" stroke="#111" stroke-width="1"/><text x="1038.700" y="236.70">2</text><text x="1038.700" y="246.00">5</text><text x="1038.700" y="255.30">0</text><path d="M1038.200 273.00v2.200" stroke="#111" stroke-width="1"/><text x="1038.700" y="286.70">2</text><text x="1038.700" y="296.00">0</text><text x="1038.700" y="305.30">0</text><path d="M1038.200 323.00v2.200" stroke="#111" stroke-width="1"/><text x="1038.700" y="336.70">1</text><text x="1038.700" y="346.00">5</text><text x="1038.700" y="355.30">0</text><path d="M1038.200 373.00v2.200" stroke="#111" stroke-width="1"/><text x="1038.700" y="386.70">1</text><text x="1038.700" y="396.00">0</text><text x="1038.700" y="405.30">0</text><path d="M1038.200 423.00v2.200" stroke="#111" stroke-width="1"/><text x="1038.700" y="436.70">5</text><text x="1038.700" y="446.00">0</text><text x="1038.700" y="477.70">0</text><text x="1038.700" y="527.70">5</text><text x="1038.700" y="537.00">0</text><text x="1038.700" y="577.70">1</text><text x="1038.700" y="587.00">0</text><text x="1038.700" y="596.30">0</text><text x="1038.700" y="627.70">1</text><text x="1038.700" y="637.00">5</text><text x="1038.700" y="646.30">0</text><text x="1038.700" y="677.70">2</text><text x="1038.700" y="687.00">0</text><text x="1038.700" y="696.30">0</text><text x="1038.700" y="727.70">2</text><text x="1038.700" y="737.00">5</text><text x="1038.700" y="746.30">0</text></g><path d="M1044 668.500v7l4.500-3.500z" fill="#111"/></svg>
<svg style="left:329px;top:200px" width="11" height="8" viewBox="0 0 11 8"><path d="M1.500 6.500L5.500 2.500L9.500 6.500" fill="none" stroke="#444" stroke-width="1.900"/></svg>
<div style="left:327px;top:211px;width:15px;height:532px;background:#cdcdcd"></div>
<svg style="left:329px;top:748px" width="11" height="8" viewBox="0 0 11 8"><path d="M1.500 1.500L5.500 5.500L9.500 1.500" fill="none" stroke="#444" stroke-width="1.900"/></svg>
<svg style="left:327px;top:762px" width="15" height="15" viewBox="0 0 15 15"><path d="M7.500 .5L10 3.500H8.500V6.500H11.500V5L14.500 7.500L11.500 10V8.500H8.500V11.500H10L7.500 14.500L5 11.500H6.500V8.500H3.500V10L.5 7.500L3.500 5V6.500H6.500V3.500H5Z" fill="#2a4a8c"/></svg>
<svg style="left:347px;top:764px" width="8" height="11" viewBox="0 0 8 11"><path d="M6.500 1.500L2.500 5.500L6.500 9.500" fill="none" stroke="#444" stroke-width="1.900"/></svg>
<div style="left:360px;top:762px;width:654px;height:14px;background:#cdcdcd"></div>
<svg style="left:1019px;top:764px" width="8" height="11" viewBox="0 0 8 11"><path d="M1.500 1.500L5.500 5.500L1.500 9.500" fill="none" stroke="#444" stroke-width="1.900"/></svg>
<div style="left:1036px;top:765px;width:10px;height:10px;border:1px dashed #999"></div>
<div style="left:344px;top:778px;width:706px;height:27px;border-left:1px solid #8a8a8a;border-top:1px solid #a0a0a0;background:#f0f0f0"></div>
<div style="left:326px;top:777px;width:724px;height:1px;background:#fafafa"></div>
<svg style="left:333px;top:791px" width="10" height="10" viewBox="0 0 10 10"><g fill="#b8b8b8"><rect x="7" y="1" width="2" height="2"/><rect x="4" y="4" width="2" height="2"/><rect x="7" y="4" width="2" height="2"/><rect x="1" y="7" width="2" height="2"/><rect x="4" y="7" width="2" height="2"/><rect x="7" y="7" width="2" height="2"/></g></svg>
<div style="left:947px;top:780px;width:42px;height:21px;border:1px solid #acacac;background:#e8e8e8;box-shadow:inset 0 0 0 1px #f4f4f4"></div>
<svg style="left:962.500px;top:787px" width="10" height="7" viewBox="0 0 10 7"><path d="M1 1L5 5L9 1" fill="none" stroke="#444" stroke-width="1.700"/></svg>
<div class="t" style="left:973.0px;top:786.2px;font-size:10.6px;transform-origin:0 50%;transform:scaleX(1.076);">px</div>
<div style="left:884px;top:780px;width:62px;height:21px;border:1px solid #acacac;background:#fff"></div>
<div style="left:884px;top:780px;width:12px;height:21px;border:1px solid #acacac;background:#e8e8e8"></div>
<svg style="left:886px;top:787px" width="8" height="7" viewBox="0 0 8 7"><path d="M.8 1L4 4.800L7.200 1" fill="none" stroke="#444" stroke-width="1.600"/></svg>
<div class="t" style="left:898.5px;top:786.5px;font-size:10px;transform-origin:0 50%;transform:scaleX(0.917);">% 100</div>
<div class="t" style="left:680.4px;top:784.7px;font-size:11.6px;transform-origin:0 50%;transform:scaleX(1.012);direction:ltr">Frame 2 (100ms) (combine) (23.8 ק"ב)</div>
<svg style="left:680.5px;top:468.7px" width="15.6" height="15.6" viewBox="0 0 16 16"><rect x="0" y="0" width="16" height="16" fill="#8a8a8a"/><path d="M0 0h4v4h-4zM12 0h4v4h-4zM0 12h4v4h-4zM12 12h4v4h-4z" fill="#666"/><path d="M1.500 1.500h1.500v1.500h-1.500zM13 1.500h1.500v1.500h-1.500zM1.500 13h1.500v1.500h-1.500zM13 13h1.500v1.500h-1.500z" fill="#eee"/><defs><radialGradient id="smb" cx=".42" cy=".3" r=".75"><stop offset="0" stop-color="#fff0a0"/><stop offset=".45" stop-color="#fdc010"/><stop offset="1" stop-color="#e08800"/></radialGradient></defs><circle cx="8" cy="8" r="7.300" fill="url(#smb)" stroke="#1a0a00" stroke-width="1.300"/><path d="M3.600 6.200 C4.300 4.600 6 4.600 6.800 6 M9.200 6 C10 4.600 11.700 4.600 12.400 6.200" fill="none" stroke="#1a0a00" stroke-width="1.100"/><path d="M3 8.600 L13 8.600 C12.500 11.600 10.500 12.800 8 12.800 C5.500 12.800 3.500 11.600 3 8.600Z" fill="#140400"/></svg>
</div>

</div>

<!-- ================= DOCK ================= -->
<div id="dock" class="abs win" style="left:1054px;top:4px;width:225px;height:858px">
<div style="left:-1054px;top:-4px;width:0;height:0">
<svg style="left:0;top:0" width="0" height="0"><defs><pattern id="stp" width="2" height="2" patternUnits="userSpaceOnUse"><rect width="2" height="2" fill="#c8c8c8"/><rect width="1" height="1" fill="#6e6e6e"/><rect x="1" y="1" width="1" height="1" fill="#6e6e6e"/></pattern></defs></svg>
<div style="left:1054px;top:4px;width:225px;height:858px;border:1px solid #d8dce0"></div>
<div class="t" style="left:1111.7px;top:10.5px;font-size:16.4px;transform-origin:0 50%;transform:scaleX(0.930);color:#222;direction:rtl">שכבות - דוגמאות</div>
<div style="left:1252px;top:9px;width:19px;height:19px;background:#bcbcbc"></div>
<svg style="left:1258px;top:15px" width="8" height="8" viewBox="0 0 8 8"><path d="M1 1L7 7M7 1L1 7" stroke="#fff" stroke-width="1.800"/></svg>
<div style="left:1061px;top:33px;width:211px;height:821px;background:#f0f0f0;border:1px solid #dcdcdc"></div>
<div style="left:1154px;top:36.500px;width:27.5px;height:27px;background:#ececec;border:1px solid #c2c2c2;border-bottom:none"></div>
<div style="left:1182.5px;top:36.500px;width:28.5px;height:27px;background:#ececec;border:1px solid #c2c2c2;border-bottom:none"></div>
<div style="left:1212px;top:36.500px;width:28.5px;height:27px;background:#ececec;border:1px solid #c2c2c2;border-bottom:none"></div>
<div style="left:1062px;top:63px;width:210px;height:391px;background:#fff;border:1px solid #b4b4b4"></div>
<div style="left:1241px;top:34px;width:31px;height:31px;background:#fff;border:1px solid #c9c9c9;border-bottom:none"></div>
<div style="left:1068px;top:44px;width:11px;height:11px;border:1px solid #8a8a8a;border-radius:2px;background:#f6f6f6"></div>
<svg style="left:1071px;top:46.5px" width="6" height="6" viewBox="0 0 6 6"><path d="M.5 0L5.500 3L.5 6Z" fill="#555"/></svg>
<svg style="left:1244px;top:40px" width="25" height="21" viewBox="0 0 25 21"><g fill="#f2f2f2" stroke="#a4a4a4" stroke-width="1"><path d="M1.500 19.500L5 13.500H23.500L20 19.500Z"/><path d="M1.500 14.500L5 8.500H23.500L20 14.500Z"/><path d="M1.500 9.500L5 1.500H23.500L20 9.500Z" fill="#e4e4e4"/></g></svg>
<svg style="left:1213px;top:39px" width="26" height="23" viewBox="0 0 26 23"><path d="M1.500 21L4.500 17H24L20.500 21Z" fill="#3a6ab4" stroke="#204a87" stroke-width=".8"/><path d="M1.500 18L4.500 13.500H24L20.500 18Z" fill="#4aa02c" stroke="#2a7010" stroke-width=".8"/><path d="M1.500 14L5.500 1.500H25L20.500 14Z" fill="#e82020" stroke="#b00000" stroke-width=".8"/><path d="M6.500 3H23.500L22.500 6H5.500Z" fill="#f06060" opacity=".6"/></svg>
<svg style="left:1184px;top:39px" width="26" height="22" viewBox="0 0 26 22"><path d="M14 3L19 1.500L19 4.500C24 6 25 12 21.500 16.500C22.500 12 21 9.500 18.500 9L18.500 12Z" fill="#f4e080" stroke="#e0c040" stroke-width=".7"/><path d="M1.500 8L9.500 1.500L9.500 5.500C16 6 18 13 13 19.500L8.500 19.500C13 15 12.500 11.500 9.500 11L9.500 14.500Z" fill="#f8d820" stroke="#c4a000" stroke-width=".9"/><path d="M4 20.500H20" stroke="#d0d0d0" stroke-width="1.500"/></svg>
<svg style="left:1156px;top:39px" width="24" height="23" viewBox="0 0 24 23"><g fill="none" stroke="#445" stroke-width=".9"><path d="M1.500 11C5 9 6 6 7.500 4.500C9 8 10 12 18.500 13.500C20 11 20.500 8 21 3"/><path d="M5.500 21.500C7 18 10 16.500 13 17.500C14 19 15 20.500 16 21"/><path d="M4 17C4 12 6 7 7.500 4.500L14 1"/></g><g fill="#111"><rect x="12.500" y=".3" width="2.400" height="2.400"/><rect x=".6" y="9.800" width="2.400" height="2.400"/><rect x="20" y="7.500" width="2.400" height="2.400"/><rect x="8" y="11.500" width="2.400" height="2.400"/><rect x="14" y="13" width="2.400" height="2.400"/><rect x="15.500" y="19.800" width="2.400" height="2.400"/></g><g fill="#fff" stroke="#111" stroke-width=".9"><rect x="6" y="3.500" width="3" height="3"/><rect x="17" y="9.500" width="3" height="3"/><rect x="12" y="16" width="3" height="3"/></g></svg>
<div style="left:1066px;top:68px;width:175px;height:19px;background:linear-gradient(90deg,#f1f1f1,#fbfbfb 60%,#fff)"></div>
<div class="btn" style="left:1066px;top:68px;width:19px;height:19px"></div>
<svg style="left:1070.500px;top:74.500px" width="10" height="7" viewBox="0 0 10 7"><path d="M1 1L5 5L9 1" fill="none" stroke="#444" stroke-width="1.800"/></svg>
<div class="t" style="left:1246.5px;top:72.1px;font-size:10.4px;transform-origin:0 50%;transform:scaleX(0.992);direction:rtl">מצב:</div>
<div class="t" style="left:1209.3px;top:72.4px;font-size:9.8px;transform-origin:0 50%;transform:scaleX(1.016);">Normal</div>
<div class="slider" style="left:1066px;top:89px;width:202px;height:28px"><div class="fill" style="left:10px"></div><div class="spin"></div></div>
<svg style="left:1067px;top:90px" width="10" height="26" viewBox="0 0 10 26"><path d="M1 8.500L3.500 5.500L6 8.500Z" fill="#8c8c8c"/><path d="M1 19L3.500 22L6 19Z" fill="#111"/><path d="M7.500 2V24" stroke="#9c9c9c" stroke-width="1"/><path d="M1 13.500H7.500" stroke="#a8a8a8" stroke-width=".9"/></svg>
<div class="t" style="left:1078.0px;top:99.0px;font-size:9.8px;transform-origin:0 50%;transform:scaleX(0.916);">100.0</div>
<div class="t" style="left:1232.9px;top:98.7px;font-size:10.4px;transform-origin:0 50%;transform:scaleX(1.019);">אטימות</div>
<div class="t" style="left:1245.5px;top:124.6px;font-size:9.8px;transform-origin:0 50%;transform:scaleX(0.968);">Lock:</div>
<svg style="left:1225px;top:122px" width="16" height="16" viewBox="0 0 16 16"><path d="M10.300 3.600L12.300 1.500C13.300 .8 15.300 2.800 14.600 3.900L12.900 6.200Z" fill="#f0b478" stroke="#d89050" stroke-width=".5"/><path d="M10.300 3.600L12.900 6.200L9.600 10.600L6.900 9Z" fill="#d4d4d4" stroke="#8c8c8c" stroke-width=".6"/><path d="M8.600 5.800L11 7.800" stroke="#f4f4f4" stroke-width=".8"/><path d="M6.900 9L9.600 10.600C9.600 13.600 5.500 15 .6 14.800C3.500 13.300 5.300 11.500 6.900 9Z" fill="#0c0c0c"/><circle cx="6.800" cy="11.500" r=".8" fill="#555"/></svg>
<svg style="left:1203px;top:121px" width="16" height="16" viewBox="0 0 16 15" preserveAspectRatio="none"><rect width="16" height="15" fill="#8c8c8c"/><path d="M0 0h4v3.750h-4zM8 0h4v3.750h-4zM4 3.750h4v3.750h-4zM12 3.750h4v3.750h-4zM0 7.500h4v3.750h-4zM8 7.500h4v3.750h-4zM4 11.250h4v3.750h-4zM12 11.250h4v3.750h-4z" fill="#666"/></svg>
<div style="left:1066px;top:141px;width:202px;height:289px;background:#fff;border:1px solid #b8b8b8"></div>
<div style="left:1067px;top:142px;width:200px;height:41px;background:#f0f0f0"></div>
<div class="t" style="left:1069.5px;top:158.8px;font-size:9.8px;transform-origin:0 50%;transform:scaleX(1.008);">(100ms) (combine)</div>
<div class="t" style="left:1070.9px;top:198.7px;font-size:9.8px;transform-origin:0 50%;transform:scaleX(1.019);">Background (0ms)</div>
<svg style="left:1158px;top:146.800px" width="32.300" height="32.300" viewBox="0 0 32 32"><rect width="32" height="32" fill="#8e8e8e"/><path d="M0 0h4v4h-4zM8 0h4v4h-4zM16 0h4v4h-4zM24 0h4v4h-4zM4 4h4v4h-4zM12 4h4v4h-4zM20 4h4v4h-4zM28 4h4v4h-4zM0 8h4v4h-4zM8 8h4v4h-4zM16 8h4v4h-4zM24 8h4v4h-4zM4 12h4v4h-4zM12 12h4v4h-4zM20 12h4v4h-4zM28 12h4v4h-4zM0 16h4v4h-4zM8 16h4v4h-4zM16 16h4v4h-4zM24 16h4v4h-4zM4 20h4v4h-4zM12 20h4v4h-4zM20 20h4v4h-4zM28 20h4v4h-4zM0 24h4v4h-4zM8 24h4v4h-4zM16 24h4v4h-4zM24 24h4v4h-4zM4 28h4v4h-4zM12 28h4v4h-4zM20 28h4v4h-4zM28 28h4v4h-4z" fill="#6a6a6a"/><path d="M8 11C9.500 8.500 12.500 8.500 14 11M18 11C19.500 8.500 22.500 8.500 24 11" fill="none" stroke="#1a1a1a" stroke-width="1.600"/><path d="M9 10C10.500 8.800 12 8.800 13 10M19 10C20.500 8.800 22 8.800 23.500 10" fill="none" stroke="#f0b040" stroke-width="1.200"/><path d="M6 18.500H25" stroke="#1a1a1a" stroke-width="1.800"/></svg>
<div style="left:1212px;top:151px;width:24px;height:24px;background:#f0f0f0;border-right:1px solid #111;border-bottom:1px solid #111"></div>
<div style="left:1240px;top:151px;width:24px;height:24px;background:#f0f0f0;border-left:1px solid #111;border-top:1px solid #111"></div>
<svg style="left:1243.5px;top:158.5px" width="17" height="10" viewBox="0 0 17 10"><path d="M.8 5C4 .5 13 .5 16.200 5C13 9.500 4 9.500 .8 5Z" fill="#fff" stroke="#6a7480" stroke-width="1"/><circle cx="8.500" cy="4.800" r="3.300" fill="#3a6ab0"/><circle cx="8.500" cy="4.800" r="1.600" fill="#0a1020"/><circle cx="7.500" cy="3.600" r=".8" fill="#fff"/></svg>
<svg style="left:1243.5px;top:198px" width="17" height="10" viewBox="0 0 17 10"><path d="M.8 5C4 .5 13 .5 16.200 5C13 9.500 4 9.500 .8 5Z" fill="#fff" stroke="#6a7480" stroke-width="1"/><circle cx="8.500" cy="4.800" r="3.300" fill="#3a6ab0"/><circle cx="8.500" cy="4.800" r="1.600" fill="#0a1020"/><circle cx="7.500" cy="3.600" r=".8" fill="#fff"/></svg>
<svg style="left:1155.800px;top:184.800px" width="36.200" height="36.200" viewBox="0 0 36 36"><defs><radialGradient id="smc" cx=".42" cy=".3" r=".75"><stop offset="0" stop-color="#fff0a0"/><stop offset=".45" stop-color="#fdc010"/><stop offset="1" stop-color="#e08800"/></radialGradient></defs><rect width="36" height="36" fill="#000"/><rect x="2" y="2" width="32" height="32" fill="#8e8e8e"/><path d="M2 2h6v6h-6zM28 2h6v6h-6zM2 28h6v6h-6zM28 28h6v6h-6z" fill="#666"/><path d="M4.500 4.500h3v3h-3zM28.500 4.500h3v3h-3zM4.500 28.500h3v3h-3zM28.500 28.500h3v3h-3z" fill="#e8e8e8"/><circle cx="18" cy="18" r="14.500" fill="url(#smc)" stroke="#1a0a00" stroke-width="2.200"/><path d="M8.500 14C10 10.500 14 10.500 15.500 13.500M20.500 13.500C22 10.500 26 10.500 27.500 14" fill="none" stroke="#1a0a00" stroke-width="1.900"/><path d="M7 19.500L29 19.500C28 26 23.500 28.500 18 28.500C12.500 28.500 8 26 7 19.500Z" fill="#140400"/></svg>
<div style="left:1067px;top:413px;width:200px;height:16px;background:#f0f0f0"></div>
<div style="left:1113px;top:413px;width:136px;height:16px;background:#cdcdcd"></div>
<svg style="left:1072px;top:415.500px" width="8" height="11" viewBox="0 0 8 11"><path d="M6.500 1.500L2.500 5.500L6.500 9.500" fill="none" stroke="#444" stroke-width="1.900"/></svg>
<svg style="left:1254px;top:415.500px" width="8" height="11" viewBox="0 0 8 11"><path d="M1.500 1.500L5.500 5.500L1.500 9.500" fill="none" stroke="#c8c8c8" stroke-width="1.900"/></svg>
<svg style="left:1073.68px;top:434.82px" width="12.04" height="13.76" viewBox="0 0 14 16"><path d="M1.500 3.500L2.500 13.500C2.500 15.500 11.500 15.500 11.500 13.500L12.500 3.500Z" fill="#7a7a7a" stroke="#444" stroke-width=".8"/><path d="M4 5L4.600 13.500" stroke="#aaa" stroke-width="1.500"/><ellipse cx="7" cy="3.300" rx="5.800" ry="2.500" fill="#999" stroke="#444" stroke-width=".8"/><ellipse cx="7" cy="3.300" rx="3.600" ry="1.300" fill="#333"/></svg>
<svg style="left:1102.88px;top:435.25px" width="12.04" height="12.9" viewBox="0 0 14 15"><g fill="none" stroke="url(#stp)" stroke-width="2.400"><path d="M7 3.500V13.500M3.800 6H10.200M1.200 8.500C1.500 12.500 4 13.600 7 13.600C10 13.600 12.500 12.500 12.800 8.500"/></g><circle cx="7" cy="2.200" r="1.600" fill="none" stroke="url(#stp)" stroke-width="1.600"/></svg>
<svg style="left:1132.15px;top:435.25px" width="12.9" height="12.9" viewBox="0 0 15 15"><rect x="4" y="4" width="10" height="10" fill="#c8ccd8" stroke="#7a8094" stroke-width=".9"/><rect x=".7" y=".7" width="10.500" height="10.500" fill="#6a789c" stroke="#4a5474" stroke-width=".9"/><rect x="2.200" y="2.200" width="7.500" height="5" fill="#3a4a74"/><path d="M2.200 7.200L5 4.500L7 6.200L8.500 5L9.700 7.200Z" fill="#9aa8c8"/></svg>
<svg style="left:1161.28px;top:435.25px" width="12.04" height="12.9" viewBox="0 0 14 15"><path d="M4 .8H10V7H13.200L7 14L.8 7H4Z" fill="#73d216" stroke="#4e9a06" stroke-width=".9"/><path d="M5 2H9V8H11L7 12.500" fill="none" stroke="#b0f060" stroke-width=".8" opacity=".8"/></svg>
<svg style="left:1190.38px;top:435.25px" width="12.04" height="12.9" viewBox="0 0 14 15"><path d="M4 14.200H10V8H13.200L7 1L.8 8H4Z" fill="url(#stp)"/></svg>
<svg style="left:1218.72px;top:435.68px" width="13.76" height="12.04" viewBox="0 0 16 14"><path d="M1 13V2.500L2.500 1H7L8.500 3H15V13Z" fill="url(#stp)"/></svg>
<svg style="left:1249.21px;top:435.25px" width="11.18" height="12.9" viewBox="0 0 13 15"><path d="M1 .8H8.500L12 4.500V14.200H1Z" fill="#fcfcfc" stroke="#b4b4b4" stroke-width="1"/><path d="M8.500 .8V4.500H12" fill="#eee" stroke="#b4b4b4" stroke-width=".9"/></svg>
<div style="left:1188px;top:462.500px;width:26px;height:26px;background:#ececec;border:1px solid #c2c2c2;border-bottom:none"></div>
<div style="left:1245px;top:462.500px;width:27px;height:26px;background:#ececec;border:1px solid #c2c2c2;border-bottom:none"></div>
<div style="left:1062px;top:487px;width:210px;height:367px;background:#fff;border:1px solid #b4b4b4"></div>
<div style="left:1214px;top:460.500px;width:32px;height:28px;background:#fff;border:1px solid #c9c9c9;border-bottom:none"></div>
<div style="left:1068px;top:469.5px;width:11px;height:11px;border:1px solid #8a8a8a;border-radius:2px;background:#f6f6f6"></div>
<svg style="left:1071px;top:472px" width="6" height="6" viewBox="0 0 6 6"><path d="M.5 0L5.500 3L.5 6Z" fill="#555"/></svg>
<div style="left:1189.600px;top:465px;width:22.400px;height:21.600px;background:linear-gradient(90deg,#000,#fff);border:1px solid #222;border-left-width:0"></div>
<div style="left:1218px;top:464px;width:22.300px;height:21.800px;border:1px solid #111;background:linear-gradient(90deg,#f8a830,#fcc060 20%,#f8a830 35%,#fdb850 50%,#e89828 55%,#fcb850 70%,#f8a830 85%,#f0a028)"></div>
<div style="left:1246.200px;top:465px;width:22px;height:21.600px;border:1px solid #222;background:radial-gradient(circle at 10px 10px,#111 0,#222 3px,rgba(120,120,120,.55) 6px,rgba(255,255,255,0) 9.500px),#fff"></div>
<svg style="left:1262px;top:480.500px" width="7" height="7" viewBox="0 0 7 7"><path d="M3.500 0V7M0 3.500H7" stroke="#1c2a9c" stroke-width="1.700"/></svg>
<div style="left:1066px;top:492px;width:202px;height:20px;background:#fff;border:1px solid #b0b0b0"></div>
<svg style="left:1072px;top:499.500px" width="8" height="5" viewBox="0 0 8 5"><path d="M0 0H8L4 5Z" fill="#111"/></svg>
<div class="t" style="left:1242.7px;top:497.5px;font-size:10px;transform-origin:0 50%;transform:scaleX(1.142);font-style:italic;color:#808890">filter</div>
<div class="t" style="left:1206.0px;top:515.7px;font-size:10px;transform-origin:0 50%;transform:scaleX(0.987);font-style:italic;color:#222">Pine (64 × 56)</div>
<div style="left:1066px;top:528px;width:202px;height:276px;background:#fff;border:1px solid #b8b8b8"></div>
<div style="left:1067px;top:529px;width:14px;height:274px;background:#f0f0f0"></div>
<div style="left:1065.500px;top:547px;width:15px;height:159px;background:#cdcdcd"></div>
<svg style="left:1067.500px;top:534.500px" width="11" height="8" viewBox="0 0 11 8"><path d="M1.500 6.500L5.500 2.500L9.500 6.500" fill="none" stroke="#c0c0c0" stroke-width="1.900"/></svg>
<svg style="left:1067.500px;top:791.500px" width="11" height="8" viewBox="0 0 11 8"><path d="M1.500 1.500L5.500 5.500L9.500 1.500" fill="none" stroke="#444" stroke-width="1.900"/></svg>
<svg style="left:0;top:0" width="1282" height="867" viewBox="0 0 1282 867">
<defs>
<filter id="nfd" x="0" y="0" width="1" height="1"><feTurbulence type="fractalNoise" baseFrequency=".55" numOctaves="2" seed="3"/><feColorMatrix type="matrix" values="0 0 0 0 0 0 0 0 0 0 0 0 0 0 0 2.600 0 0 0 -1"/></filter>
<filter id="nfl" x="0" y="0" width="1" height="1"><feTurbulence type="fractalNoise" baseFrequency=".5" numOctaves="2" seed="11"/><feColorMatrix type="matrix" values="0 0 0 0 1 0 0 0 0 1 0 0 0 0 1 0 2.600 0 0 -1"/></filter>
<filter id="ncd" x="0" y="0" width="1" height="1"><feTurbulence type="fractalNoise" baseFrequency=".09" numOctaves="3" seed="5"/><feColorMatrix type="matrix" values="0 0 0 0 0 0 0 0 0 0 0 0 0 0 0 3.400 0 0 0 -1.400"/></filter>
<filter id="ncl" x="0" y="0" width="1" height="1"><feTurbulence type="fractalNoise" baseFrequency=".08" numOctaves="3" seed="8"/><feColorMatrix type="matrix" values="0 0 0 0 1 0 0 0 0 1 0 0 0 0 1 0 3.400 0 0 -1.400"/></filter>
<filter id="nvd" x="0" y="0" width="1" height="1"><feTurbulence type="turbulence" baseFrequency=".07" numOctaves="3" seed="14"/><feColorMatrix type="matrix" values="0 0 0 0 0 0 0 0 0 0 0 0 0 0 0 -9 0 0 0 1.300"/></filter>
<filter id="nvl" x="0" y="0" width="1" height="1"><feTurbulence type="turbulence" baseFrequency=".07" numOctaves="3" seed="21"/><feColorMatrix type="matrix" values="0 0 0 0 1 0 0 0 0 1 0 0 0 0 1 -9 0 0 0 1.300"/></filter>
<filter id="nsd" x="0" y="0" width="1" height="1"><feTurbulence type="fractalNoise" baseFrequency=".5 .03" numOctaves="2" seed="4"/><feColorMatrix type="matrix" values="0 0 0 0 0 0 0 0 0 0 0 0 0 0 0 3 0 0 0 -1.200"/></filter>
<filter id="nsl" x="0" y="0" width="1" height="1"><feTurbulence type="fractalNoise" baseFrequency=".5 .03" numOctaves="2" seed="9"/><feColorMatrix type="matrix" values="0 0 0 0 1 0 0 0 0 1 0 0 0 0 1 3 0 0 0 -1.200"/></filter>
<filter id="psy" x="0" y="0" width="1" height="1"><feTurbulence type="fractalNoise" baseFrequency=".06" numOctaves="2" seed="7"/><feColorMatrix type="matrix" values="2.500 0 0 0 -.6 0 2.800 0 0 -.8 0 0 2.600 0 -.3 0 0 0 0 1"/></filter>
<linearGradient id="pdb" x1="0" y1="0" x2="1" y2="1"><stop offset="0" stop-color="#000078"/><stop offset=".42" stop-color="#0808b0"/><stop offset=".5" stop-color="#1818c8"/><stop offset=".6" stop-color="#00008a"/><stop offset="1" stop-color="#00005a"/></linearGradient>
<linearGradient id="psb" x1="0" y1="0" x2="1" y2="1"><stop offset="0" stop-color="#3a48b0"/><stop offset=".5" stop-color="#2a3490"/><stop offset="1" stop-color="#04041c"/></linearGradient>
<radialGradient id="psw" cx=".3" cy=".4" r=".8"><stop offset="0" stop-color="#6a2400"/><stop offset=".35" stop-color="#a85020"/><stop offset=".6" stop-color="#5a1c00"/><stop offset="1" stop-color="#3a1000"/></radialGradient>
<linearGradient id="ppine" x1="0" y1="0" x2="1" y2="0"><stop offset="0" stop-color="#e89020"/><stop offset=".1" stop-color="#fbb040"/><stop offset=".22" stop-color="#f8a430"/><stop offset=".3" stop-color="#fdc060"/><stop offset=".42" stop-color="#f8a834"/><stop offset=".5" stop-color="#f09828"/><stop offset=".58" stop-color="#fcb850"/><stop offset=".7" stop-color="#f8a838"/><stop offset=".8" stop-color="#fdbc58"/><stop offset=".9" stop-color="#f4a030"/><stop offset="1" stop-color="#fbb040"/></linearGradient>
</defs>
<g>
<rect x="1121" y="531" width="32" height="32" fill="#1c8062"/>
<rect x="1121" y="531" width="32" height="32" filter="url(#nfd)" opacity="0.55"/>
<rect x="1121" y="531" width="32" height="32" filter="url(#nfl)" opacity="0.18"/>
</g>
<g>
<rect x="1155" y="531" width="32" height="32" fill="#6a5866"/>
<rect x="1155" y="531" width="32" height="32" filter="url(#ncd)" opacity="0.35"/>
<rect x="1155" y="531" width="32" height="32" filter="url(#nvl)" opacity="0.35"/>
<rect x="1155" y="531" width="32" height="32" filter="url(#nfd)" opacity="0.15"/>
</g>
<g>
<rect x="1189" y="531" width="32" height="32" fill="url(#pdb)"/>
</g>
<g>
<rect x="1226.5" y="534.5" width="25" height="25" fill="url(#psb)"/>
<rect x="1226.5" y="534.5" width="25" height="25" filter="url(#nfl)" opacity="0.35"/>
</g>
<g>
<rect x="1087" y="565" width="32" height="32" fill="#a4cce6"/>
<svg x="1087" y="565" width="32" height="32" style="overflow:hidden"><rect x="0" y="0" width="32" height="32" fill="#a4cce6"/><rect x="0" y="0" width="10" height="8" fill="#b8dcec"/><rect x="10" y="0" width="8" height="7" fill="#4a80b8"/><rect x="18" y="0" width="8" height="10" fill="#8aa8d0"/><rect x="26" y="0" width="6" height="8" fill="#2a5cf0"/><rect x="0" y="10" width="9" height="9" fill="#5a94c8"/><rect x="9" y="8" width="12" height="12" fill="#b0dcf0"/><rect x="22" y="9" width="10" height="9" fill="#5a7cc0"/><rect x="0" y="21" width="10" height="11" fill="#2a9cfa"/><rect x="10" y="20" width="8" height="8" fill="#88b8e0"/><rect x="19" y="19" width="9" height="10" fill="#161a62"/><rect x="28" y="18" width="4" height="8" fill="#4a5cb0"/><rect x="10" y="28" width="8" height="4" fill="#60a0e0"/><rect x="20" y="29" width="12" height="3" fill="#8a7ce0"/></svg>
<rect x="1087" y="565" width="32" height="32" filter="url(#nfl)" opacity="0.1"/>
</g>
<g>
<rect x="1121" y="565" width="32" height="32" fill="#3038ea"/>
<svg x="1121" y="565" width="32" height="32" style="overflow:hidden"><rect width="32" height="32" fill="#5a3ce8" opacity=".35"/></svg>
<rect x="1121" y="565" width="32" height="32" filter="url(#nfd)" opacity="0.25"/>
<rect x="1121" y="565" width="32" height="32" filter="url(#nvl)" opacity="0.18"/>
</g>
<g>
<rect x="1155" y="565" width="32" height="32" fill="#8a6e60"/>
<svg x="1155" y="565" width="32" height="32" style="overflow:hidden"><path d="M19 3C21 8 19 16 20 26L26 27L25 2Z" fill="#1a1010" opacity=".85"/><path d="M0 25L32 24V32H0Z" fill="#3a2a30" opacity=".7"/><path d="M3 27h26v4h-26z" fill="#b0a0a8" opacity=".4"/><path d="M25 3h7v22h-7z" fill="#a08070" opacity=".5"/></svg>
<rect x="1155" y="565" width="32" height="32" filter="url(#nfd)" opacity="0.5"/>
<rect x="1155" y="565" width="32" height="32" filter="url(#nfl)" opacity="0.35"/>
</g>
<g>
<rect x="1189" y="565" width="32" height="32" fill="#6a3a1c"/>
<svg x="1189" y="565" width="32" height="32" style="overflow:hidden"><path d="M4 2L12 18M14 0L20 14M22 6L30 28M6 18L14 32" stroke="#a86a3a" stroke-width="1.500" opacity=".45"/></svg>
<rect x="1189" y="565" width="32" height="32" filter="url(#ncd)" opacity="0.6"/>
<rect x="1189" y="565" width="32" height="32" filter="url(#nfd)" opacity="0.4"/>
<rect x="1189" y="565" width="32" height="32" filter="url(#nfl)" opacity="0.12"/>
</g>
<g>
<rect x="1223" y="565" width="32" height="32" fill="#c47c3c"/>
<svg x="1223" y="565" width="32" height="32" style="overflow:hidden"><path d="M0 22C10 18 20 26 32 20V32H0Z" fill="#7a3a10" opacity=".45"/></svg>
<rect x="1223" y="565" width="32" height="32" filter="url(#ncd)" opacity="0.35"/>
<rect x="1223" y="565" width="32" height="32" filter="url(#nfl)" opacity="0.2"/>
<rect x="1223" y="565" width="32" height="32" filter="url(#nfd)" opacity="0.2"/>
</g>
<g>
<rect x="1087" y="599" width="32" height="32" fill="url(#psw)"/>
<svg x="1087" y="599" width="32" height="32" style="overflow:hidden"><path d="M20 0C28 8 30 20 22 32" fill="none" stroke="#c87038" stroke-width="4" opacity=".45"/><path d="M0 10C6 14 8 22 2 30" fill="none" stroke="#2a0a00" stroke-width="5" opacity=".5"/></svg>
<rect x="1087" y="599" width="32" height="32" filter="url(#ncd)" opacity="0.3"/>
</g>
<g>
<rect x="1121" y="599" width="32" height="32" fill="#b8a890"/>
<rect x="1121" y="599" width="32" height="32" filter="url(#nfd)" opacity="0.18"/>
<rect x="1121" y="599" width="32" height="32" filter="url(#nfl)" opacity="0.12"/>
</g>
<g>
<rect x="1155" y="599" width="32" height="32" fill="#6c6868"/>
<rect x="1155" y="599" width="32" height="32" filter="url(#nvd)" opacity="0.55"/>
<rect x="1155" y="599" width="32" height="32" filter="url(#ncl)" opacity="0.2"/>
<rect x="1155" y="599" width="32" height="32" filter="url(#nfd)" opacity="0.15"/>
</g>
<g>
<rect x="1189" y="599" width="32" height="32" fill="#7a88bc"/>
<rect x="1189" y="599" width="32" height="32" filter="url(#ncd)" opacity="0.15"/>
<rect x="1189" y="599" width="32" height="32" filter="url(#nfd)" opacity="0.1"/>
<rect x="1189" y="599" width="32" height="32" filter="url(#ncl)" opacity="0.12"/>
</g>
<g>
<rect x="1223" y="599" width="32" height="32" fill="#f0dcc8"/>
<svg x="1223" y="599" width="32" height="32" style="overflow:hidden"><path d="M0 0H14L0 16Z" fill="#dcb898" opacity=".55"/></svg>
<rect x="1223" y="599" width="32" height="32" filter="url(#ncl)" opacity="0.45"/>
<rect x="1223" y="599" width="32" height="32" filter="url(#ncd)" opacity="0.08"/>
</g>
<g>
<rect x="1087" y="633" width="32" height="32" fill="#dcb48c"/>
<svg x="1087" y="633" width="32" height="32" style="overflow:hidden"><path d="M0 8C6 6 10 10 14 6C18 4 22 8 32 5M14 6C12 12 16 18 12 24C10 28 6 30 0 28M12 24C18 22 24 26 32 22M22 7C24 12 22 16 26 22" fill="none" stroke="#6a4020" stroke-width="1.200" opacity=".8"/><path d="M0 28C6 30 10 28 12 24L14 32H0Z" fill="#8a5a30" opacity=".4"/></svg>
<rect x="1087" y="633" width="32" height="32" filter="url(#nfd)" opacity="0.12"/>
<rect x="1087" y="633" width="32" height="32" filter="url(#ncl)" opacity="0.2"/>
</g>
<g>
<rect x="1121" y="633" width="32" height="32" fill="#0c38d8"/>
<svg x="1121" y="633" width="32" height="32" style="overflow:hidden"><path d="M0 6C6 4 8 10 14 8C18 6 22 2 32 6M14 8C12 14 16 18 12 24M0 20C6 18 8 22 12 24C18 26 22 20 32 24M22 4C24 10 22 14 26 22M12 24C12 28 14 30 12 32" fill="none" stroke="#2a9cff" stroke-width="1.800" opacity=".85"/></svg>
<rect x="1121" y="633" width="32" height="32" filter="url(#ncd)" opacity="0.3"/>
</g>
<g>
<rect x="1155" y="633" width="32" height="32" fill="#eeeef4"/>
<rect x="1155" y="633" width="32" height="32" filter="url(#nvd)" opacity="0.9"/>
<rect x="1155" y="633" width="32" height="32" filter="url(#nfd)" opacity="0.1"/>
</g>
<g>
<rect x="1189" y="633" width="32" height="32" fill="#262626"/>
<rect x="1189" y="633" width="32" height="32" filter="url(#nvl)" opacity="0.5"/>
<rect x="1189" y="633" width="32" height="32" filter="url(#ncl)" opacity="0.2"/>
<rect x="1189" y="633" width="32" height="32" filter="url(#nfd)" opacity="0.3"/>
</g>
<g>
<rect x="1223" y="633" width="32" height="32" fill="#dedef2"/>
<rect x="1223" y="633" width="32" height="32" filter="url(#ncl)" opacity="0.5"/>
<rect x="1223" y="633" width="32" height="32" filter="url(#nfd)" opacity="0.05"/>
</g>
<g>
<rect x="1087" y="667" width="32" height="32" fill="#3a2a2c"/>
<svg x="1087" y="667" width="32" height="32" style="overflow:hidden"><g fill="#5a4444" opacity=".55"><ellipse cx="6" cy="6" rx="3" ry="2"/><ellipse cx="16" cy="5" rx="3" ry="2"/><ellipse cx="26" cy="8" rx="3" ry="2"/><ellipse cx="10" cy="14" rx="3" ry="2"/><ellipse cx="22" cy="16" rx="3" ry="2"/><ellipse cx="5" cy="22" rx="3" ry="2"/><ellipse cx="15" cy="24" rx="3" ry="2"/><ellipse cx="26" cy="26" rx="3" ry="2"/></g></svg>
<rect x="1087" y="667" width="32" height="32" filter="url(#nfd)" opacity="0.55"/>
<rect x="1087" y="667" width="32" height="32" filter="url(#nfl)" opacity="0.14"/>
</g>
<g>
<rect x="1121" y="667" width="32" height="32" fill="#6e1c04"/>
<svg x="1121" y="667" width="32" height="32" style="overflow:hidden"><path d="M0 10H32M0 20H32" stroke="#3a0800" stroke-width="1" opacity=".5"/></svg>
<rect x="1121" y="667" width="32" height="32" filter="url(#nfd)" opacity="0.4"/>
<rect x="1121" y="667" width="32" height="32" filter="url(#nfl)" opacity="0.1"/>
</g>
<g>
<rect x="1155" y="667" width="32" height="32" fill="#dca468"/>
<svg x="1155" y="667" width="32" height="32" style="overflow:hidden"><g fill="none" stroke="#0c0804" stroke-width="3.600" stroke-linecap="round"><path d="M3 5C3 1 10 1 10 5C10 9 5 9 6 6"/><path d="M18 3C22 0 28 3 26 8"/><path d="M2 16C6 14 9 18 6 22"/><path d="M15 13C20 11 24 15 21 19C19 21 16 19 17 17"/><path d="M28 15C31 17 31 22 28 24"/><path d="M6 29C9 26 14 27 14 31"/><path d="M20 27C24 24 29 27 27 31"/></g></svg>
<rect x="1155" y="667" width="32" height="32" filter="url(#nfl)" opacity="0.12"/>
</g>
<g>
<rect x="1189" y="667" width="32" height="32" fill="#2a1c5c"/>
<svg x="1189" y="667" width="32" height="32" style="overflow:hidden"><path d="M18 0C20 6 26 8 32 12M22 6C24 4 26 4 28 2" fill="none" stroke="#a8a0e0" stroke-width=".8" opacity=".7"/></svg>
<rect x="1189" y="667" width="32" height="32" filter="url(#ncd)" opacity="0.4"/>
<rect x="1189" y="667" width="32" height="32" filter="url(#nfl)" opacity="0.08"/>
</g>
<g>
<rect x="1223" y="667" width="32" height="32" fill="#3c7c18"/>
<svg x="1223" y="667" width="32" height="32" style="overflow:hidden"><path d="M4 28L16 6L20 20L30 2L26 24L14 30Z" fill="#6ab42c" opacity=".7"/><path d="M0 0L10 4L4 16Z" fill="#2a5c10" opacity=".7"/></svg>
<rect x="1223" y="667" width="32" height="32" filter="url(#ncd)" opacity="0.4"/>
<rect x="1223" y="667" width="32" height="32" filter="url(#nfd)" opacity="0.15"/>
</g>
<g>
<rect x="1087" y="701" width="32" height="32" fill="#ececec"/>
<rect x="1087" y="701" width="32" height="32" filter="url(#nvd)" opacity="0.08"/>
<rect x="1087" y="701" width="32" height="32" filter="url(#ncl)" opacity="0.4"/>
</g>
<g>
<rect x="1121" y="701" width="32" height="32" fill="#e2e2e4"/>
<rect x="1121" y="701" width="32" height="32" filter="url(#nvd)" opacity="0.16"/>
<rect x="1121" y="701" width="32" height="32" filter="url(#ncl)" opacity="0.3"/>
</g>
<g>
<rect x="1155" y="701" width="32" height="32" fill="#e4e0dc"/>
<rect x="1155" y="701" width="32" height="32" filter="url(#ncd)" opacity="0.12"/>
<rect x="1155" y="701" width="32" height="32" filter="url(#ncl)" opacity="0.4"/>
<rect x="1155" y="701" width="32" height="32" filter="url(#nvd)" opacity="0.08"/>
</g>
<g>
<rect x="1189" y="701" width="32" height="32" fill="#8a8a8a"/>
<svg x="1189" y="701" width="32" height="32" style="overflow:hidden"><defs><radialGradient id="bw1"><stop offset="0" stop-color="#fff"/><stop offset="1" stop-color="#fff" stop-opacity="0"/></radialGradient><radialGradient id="bw2"><stop offset="0" stop-color="#000"/><stop offset="1" stop-color="#000" stop-opacity="0"/></radialGradient></defs><rect width="32" height="32" fill="#909090"/><circle cx="6" cy="14" r="13" fill="url(#bw2)"/><circle cx="28" cy="6" r="11" fill="url(#bw2)"/><circle cx="16" cy="4" r="9" fill="url(#bw1)"/><circle cx="20" cy="26" r="12" fill="url(#bw1)"/><circle cx="2" cy="30" r="8" fill="url(#bw1)"/><circle cx="30" cy="22" r="7" fill="url(#bw2)"/></svg>
</g>
<g>
<rect x="1223" y="701" width="32" height="32" fill="#3c3c3c"/>
<rect x="1223" y="701" width="32" height="32" filter="url(#ncd)" opacity="0.7"/>
<rect x="1223" y="701" width="32" height="32" filter="url(#ncl)" opacity="0.3"/>
<rect x="1223" y="701" width="32" height="32" filter="url(#nfd)" opacity="0.25"/>
</g>
<g>
<rect x="1087" y="735" width="32" height="32" fill="#9c9c9c"/>
<svg x="1087" y="735" width="32" height="32" style="overflow:hidden"><path d="M0 8L24 32M8 0L32 24M0 20L12 32M20 0L32 12M32 6L6 32M24 0L0 24" stroke="#c8c8c8" stroke-width=".7" opacity=".55"/></svg>
<rect x="1087" y="735" width="32" height="32" filter="url(#nfd)" opacity="0.3"/>
<rect x="1087" y="735" width="32" height="32" filter="url(#nfl)" opacity="0.25"/>
</g>
<g>
<rect x="1121" y="735" width="32" height="32" fill="#c8641c"/>
<rect x="1121" y="735" width="32" height="32" filter="url(#nsd)" opacity="0.4"/>
<rect x="1121" y="735" width="32" height="32" filter="url(#nsl)" opacity="0.3"/>
</g>
<g>
<rect x="1155" y="735" width="32" height="32" fill="#d8841c"/>
<svg x="1155" y="735" width="32" height="32" style="overflow:hidden"><path d="M0 0h16v16h-16zM16 16h16v16h-16z" fill="#b86410" opacity=".35"/><path d="M0 8h16M0 24h16M24 0v16M8 16v16" stroke="#8a4408" stroke-width=".8" opacity=".5"/></svg>
<rect x="1155" y="735" width="32" height="32" filter="url(#nsd)" opacity="0.18"/>
<rect x="1155" y="735" width="32" height="32" filter="url(#nsl)" opacity="0.18"/>
</g>
<g>
<rect x="1189" y="735" width="32" height="32" fill="#6a2a1c"/>
<svg x="1189" y="735" width="32" height="32" style="overflow:hidden"><g fill="#d08848" opacity=".9"><rect x="3" y="0" width="3" height="12"/><rect x="9" y="2" width="3" height="12"/><rect x="16" y="12" width="12" height="3"/><rect x="12" y="16" width="3" height="14"/><rect x="19" y="18" width="3" height="12"/><rect x="25" y="20" width="4" height="10"/><rect x="0" y="18" width="10" height="3"/></g><g fill="#3a0e08" opacity=".7"><rect x="14" y="0" width="2" height="12"/><rect x="0" y="14" width="12" height="2"/><rect x="16" y="15" width="16" height="2"/></g></svg>
<rect x="1189" y="735" width="32" height="32" filter="url(#nsd)" opacity="0.25"/>
</g>
<g>
<rect x="1223" y="735" width="32" height="32" fill="#5c54b4"/>
<svg x="1223" y="735" width="32" height="32" style="overflow:hidden"><path d="M6 20C10 12 18 14 20 20C22 26 28 24 30 16" fill="none" stroke="#5ad06a" stroke-width="3" opacity=".7"/><path d="M2 6C8 2 14 8 22 4" fill="none" stroke="#c060c8" stroke-width="3" opacity=".6"/></svg>
<rect x="1223" y="735" width="32" height="32" filter="url(#psy)" opacity="0.42"/>
</g>
<rect x="1085.5" y="767.5" width="35" height="35" fill="#0a0a0a"/>
<g>
<rect x="1087" y="769" width="32" height="32" fill="url(#ppine)"/>
<svg x="1087" y="769" width="32" height="32" style="overflow:hidden"><rect width="3" height="32" fill="#3a1c00" opacity=".55"/></svg>
<rect x="1087" y="769" width="32" height="32" filter="url(#nsd)" opacity="0.12"/>
</g>
<g>
<rect x="1121" y="769" width="32" height="32" fill="url(#ppine)"/>
<rect x="1121" y="769" width="32" height="32" filter="url(#nsd)" opacity="0.12"/>
</g>
<g>
<rect x="1155" y="769" width="32" height="32" fill="#ecd4cc"/>
<svg x="1155" y="769" width="32" height="32" style="overflow:hidden"><path d="M2 4C10 10 14 18 22 30M4 12C8 10 10 6 14 6" fill="none" stroke="#d09c98" stroke-width="1" opacity=".7"/></svg>
<rect x="1155" y="769" width="32" height="32" filter="url(#ncl)" opacity="0.4"/>
</g>
<g>
<rect x="1189" y="769" width="32" height="32" fill="#7a9cd8"/>
<rect x="1189" y="769" width="32" height="32" filter="url(#nvl)" opacity="0.4"/>
<rect x="1189" y="769" width="32" height="32" filter="url(#ncd)" opacity="0.15"/>
</g>
<g>
<rect x="1223" y="769" width="31" height="31" fill="#3a2a5c"/>
<svg x="1223" y="769" width="32" height="32" style="overflow:hidden"><path d="M0 8L14 14L14 32L0 26Z" fill="#4a9c98"/><path d="M14 14L30 6L30 24L14 32Z" fill="#142c8c"/><path d="M0 8L16 0L30 6L14 14Z" fill="#1c2474" opacity=".8"/></svg>
<rect x="1223" y="769" width="31" height="31" filter="url(#nfl)" opacity="0.2"/>
<rect x="1223" y="769" width="31" height="31" filter="url(#nfd)" opacity="0.3"/>
</g>
</svg>

<div style="left:1066px;top:807px;width:202px;height:20px;background:#fff;border:1px solid #b0b0b0"></div>
<svg style="left:1072px;top:815px" width="8" height="5" viewBox="0 0 8 5"><path d="M0 0H8L4 5Z" fill="#111"/></svg>
<div class="t" style="left:1221.0px;top:813.0px;font-size:10px;transform-origin:0 50%;transform:scaleX(0.973);font-style:italic;color:#808890">enter tags</div>
<svg style="left:1090.4px;top:832.9px" width="16" height="13" viewBox="0 0 16 13"><path d="M1 12V1.500L2 .8H6.500L7.500 2.500H13V12Z" fill="#c8c8a8" stroke="#a0a084" stroke-width=".9"/><path d="M1 12L3.500 5.500H15.200L13 12Z" fill="#d8d8b8" stroke="#a0a084" stroke-width=".9"/></svg>
<svg style="left:1158px;top:831.4px" width="16" height="16" viewBox="0 0 16 16"><path d="M2 7.500C2 3.500 6 1.500 9.500 2.500L9.500 .8L14 4L9.500 7.200L9.500 5C7 4.300 4.500 5.500 4.500 7.500Z" fill="#5a8ad4" stroke="#2a5aa4" stroke-width=".8"/><path d="M14 8.500C14 12.500 10 14.500 6.500 13.500L6.500 15.200L2 12L6.500 8.800L6.500 11C9 11.700 11.500 10.500 11.500 8.500Z" fill="#5a8ad4" stroke="#2a5aa4" stroke-width=".8"/></svg>
<svg style="left:1227.7px;top:831.4px" width="14" height="16" viewBox="0 0 14 16"><path d="M1.500 3.500L2.500 13.500C2.500 15.500 11.500 15.500 11.500 13.500L12.500 3.500Z" fill="url(#stp)"/><ellipse cx="7" cy="3.300" rx="5.800" ry="2.500" fill="url(#stp)"/></svg>
</div>

</div>

<!-- ================= DIALOG ================= -->
<div id="dlg" class="abs" style="left:234px;top:229px;width:307px;height:175px;background:#6badf6;box-shadow:inset 0 0 0 1px #548cd8">
<div style="left:-234px;top:-229px;width:0;height:0">
<svg style="left:243px;top:234px" width="19" height="17" viewBox="0 0 19 17"><path d="M2 8 C1 4 3 3.500 5 5.500 C7 4 11 4 13 5 L17 1.500 C18 4 17.500 7 16 9 C16 13 12 15.500 8.500 15.500 C5 15.500 2.500 13 2 10Z" fill="#6a645c" stroke="#2a2622" stroke-width=".9"/><ellipse cx="6.500" cy="9" rx="2.600" ry="2.400" fill="#fff" stroke="#222" stroke-width=".5"/><ellipse cx="11.500" cy="8.500" rx="2.800" ry="2.600" fill="#fff" stroke="#222" stroke-width=".5"/><circle cx="7" cy="9.300" r="1" fill="#111"/><circle cx="11.300" cy="9" r="1.100" fill="#111"/><ellipse cx="5" cy="13" rx="2.200" ry="1.500" fill="#1a1a1a"/></svg>
<div class="t" style="left:343.0px;top:237.1px;font-size:15.8px;transform-origin:0 50%;transform:scaleX(0.971);color:#0c1a30">מאפייני שכבה</div>
<div style="left:504px;top:230px;width:30px;height:20px;background:#c75050"></div>
<svg style="left:514.500px;top:235.500px" width="9" height="9" viewBox="0 0 9 9"><path d="M1 1L8 8M8 1L1 8" stroke="#fff" stroke-width="1.700"/></svg>
<div style="left:242px;top:260px;width:291px;height:137px;background:#f0f0f0;box-shadow:0 0 0 1px #5f9be0"></div>
<div style="left:242px;top:260px;width:291px;height:39px;border:1px solid #fdfdfd;border-bottom:1px solid #9c9c9c"></div>
<div style="left:242px;top:299px;width:291px;height:1px;background:#fbfbfb"></div>
<svg style="left:507px;top:263px" width="22" height="25" viewBox="0 0 22 25"><rect x="1" y="2" width="17" height="22" rx="1.500" fill="#fbfbfb" stroke="#a8a8a8" stroke-width="1"/><path d="M4 7H14M4 10H13M4 13H11M4 16H10M4 19H10" stroke="#d8d8d8" stroke-width="1"/><path d="M8 17 L17 5 L20 7.200 L11 19 L7.300 20.800Z" fill="#f0a030" stroke="#8a5a10" stroke-width=".8"/><path d="M10 17.500 L18.500 6.200" stroke="#f8d080" stroke-width="1"/><path d="M17 5 L18.500 3 C19.500 2 22 3.800 21.300 5.200 L20 7.200Z" fill="#e04040" stroke="#902020" stroke-width=".6"/><path d="M7.300 20.800 L8 18.300 L9.500 19.500Z" fill="#222"/></svg>
<div class="t" style="left:367.3px;top:267.1px;font-size:14.6px;transform-origin:0 50%;transform:scaleX(0.966);font-weight:bold;color:#000">עריכת מאפייני שכבה</div>
<div class="t" style="left:290.0px;top:284.7px;font-size:9.8px;transform-origin:0 50%;transform:scaleX(1.006);direction:ltr">Frame 2 (100ms) (combine)-23 ([vhappy] (imp...</div>
<svg style="left:248px;top:268px" width="34" height="23" viewBox="0 0 34 23"><rect x="0" y="0" width="34" height="23" fill="#000"/><rect x="1" y="1" width="4" height="3.5" fill="#8c8c8c"/><rect x="12" y="1" width="4.5" height="3.5" fill="#7a7a7a"/><rect x="16.5" y="1" width="6.5" height="3.5" fill="#8e8e8e"/><rect x="30" y="1" width="3" height="3.5" fill="#808080"/><rect x="5" y="4.5" width="7" height="3.5" fill="#fde9c0"/><rect x="16.5" y="4.5" width="2.5" height="3.5" fill="#7c7c84"/><rect x="23" y="4.5" width="7" height="3.5" fill="#fbb320"/><rect x="1" y="8" width="4" height="4.5" fill="#fdf0d4"/><rect x="5" y="8" width="3.5" height="4.5" fill="#707070"/><rect x="8.5" y="8" width="3.5" height="4.5" fill="#8a8a9a"/><rect x="12" y="8" width="4.5" height="4.5" fill="#fdd88a"/><rect x="16.5" y="8" width="2.5" height="4.5" fill="#8a8a8a"/><rect x="19" y="8" width="4" height="4.5" fill="#fbc860"/><rect x="23" y="8" width="3.5" height="4.5" fill="#7a8aa8"/><rect x="26.5" y="8" width="3.5" height="4.5" fill="#8c8c8c"/><rect x="30" y="8" width="3" height="4.5" fill="#fba818"/><rect x="1" y="12.5" width="32" height="6.5" fill="#8c8c8c"/><rect x="1" y="12.5" width="4" height="3.2" fill="#6c6c6c"/><rect x="1" y="15.7" width="4" height="3.2" fill="#949494"/><rect x="5" y="15.7" width="4" height="3.2" fill="#6c6c6c"/><rect x="5" y="12.5" width="4" height="3.2" fill="#949494"/><rect x="9" y="12.5" width="4" height="3.2" fill="#6c6c6c"/><rect x="9" y="15.7" width="4" height="3.2" fill="#949494"/><rect x="13" y="15.7" width="4" height="3.2" fill="#6c6c6c"/><rect x="13" y="12.5" width="4" height="3.2" fill="#949494"/><rect x="17" y="12.5" width="4" height="3.2" fill="#6c6c6c"/><rect x="17" y="15.7" width="4" height="3.2" fill="#949494"/><rect x="21" y="15.7" width="4" height="3.2" fill="#6c6c6c"/><rect x="21" y="12.5" width="4" height="3.2" fill="#949494"/><rect x="25" y="12.5" width="4" height="3.2" fill="#6c6c6c"/><rect x="25" y="15.7" width="4" height="3.2" fill="#949494"/><rect x="29" y="15.7" width="4" height="3.2" fill="#6c6c6c"/><rect x="29" y="12.5" width="4" height="3.2" fill="#949494"/></svg>
<div style="left:254px;top:311px;width:197px;height:23px;background:#fff;border:1px solid #abadb3;border-top-color:#8e8f94"></div>
<div style="left:258px;top:315.500px;width:145px;height:15px;background:#3399ff"></div>
<div class="t" style="left:258.3px;top:317.2px;font-size:11.6px;transform-origin:0 50%;transform:scaleX(1.008);color:#fff">Frame 2 (100ms) (combine)</div>
<div class="t" style="left:457.1px;top:317.2px;font-size:11.6px;transform-origin:0 50%;transform:scaleX(1.000);text-underline-offset:1px">Layer <u>n</u>ame:</div>
<div style="left:255px;top:359.500px;width:83px;height:24.500px;border:1px solid #acacac;background:linear-gradient(#f1f1f1,#ececec 48%,#e3e3e3 52%,#dbdbdb);box-shadow:inset 0 0 0 1px rgba(255,255,255,.6)"></div>
<div class="t" style="left:281.9px;top:366.1px;font-size:12.4px;transform-origin:0 50%;transform:scaleX(1.025);text-underline-offset:1px;color:#000"><u>ב</u>יטול</div>
<div style="left:346px;top:359.500px;width:83px;height:24.500px;border:1px solid #3399ff;background:linear-gradient(#f1f1f1,#ececec 48%,#e3e3e3 52%,#dbdbdb);box-shadow:inset 0 0 0 1px rgba(255,255,255,.6)"></div>
<div class="t" style="left:371.4px;top:366.1px;font-size:12.4px;transform-origin:0 50%;transform:scaleX(1.045);text-underline-offset:1px;color:#000"><u>א</u>ישור</div>
<div style="left:437px;top:359.500px;width:83px;height:24.500px;border:1px solid #acacac;background:linear-gradient(#f1f1f1,#ececec 48%,#e3e3e3 52%,#dbdbdb);box-shadow:inset 0 0 0 1px rgba(255,255,255,.6)"></div>
<div class="t" style="left:465.1px;top:366.1px;font-size:12.4px;transform-origin:0 50%;transform:scaleX(1.056);text-underline-offset:1px;color:#000"><u>ע</u>זרה</div>
</div>

</div>
</body>
</html>
